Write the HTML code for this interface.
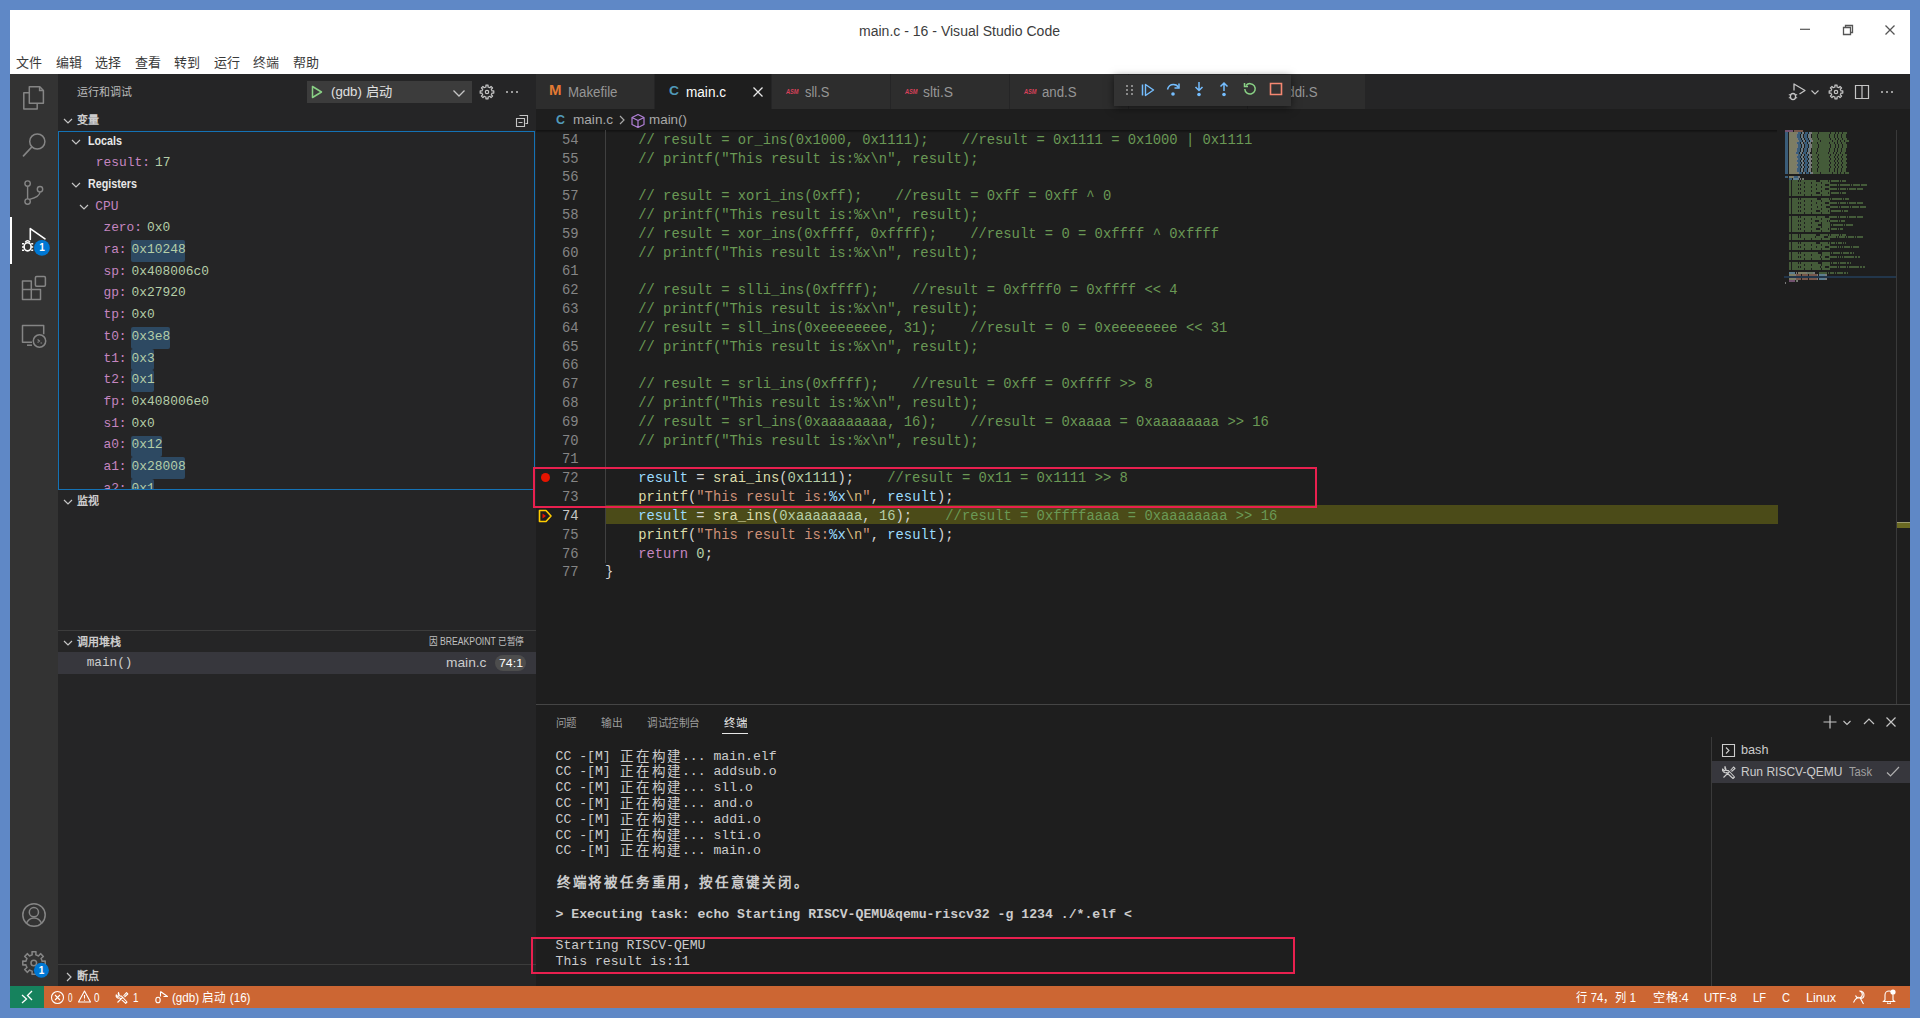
<!DOCTYPE html>
<html lang="zh-CN"><head><meta charset="utf-8"><title>main.c - 16 - Visual Studio Code</title>
<style>
html,body{margin:0;padding:0;width:1920px;height:1018px;overflow:hidden;background:#5f88c6;}
body>div,body>svg{position:absolute;}
body{font-family:"Liberation Sans",sans-serif;}
</style></head><body>
<div style="left:0px;top:0px;width:1920px;height:1018px;background:#5f88c6;"></div>
<div style="left:10px;top:10px;width:1900px;height:64px;background:#ffffff;"></div>
<div style="left:859px;top:21.00px;line-height:20px;font-size:14px;color:#3c3c3c;font-family:'Liberation Sans',sans-serif;white-space:pre;transform:scaleX(1.0024);transform-origin:0 50%;">main.c - 16 - Visual Studio Code</div>
<svg style="left:1799px;top:22px;" width="14" height="14" viewBox="0 0 14 14" fill="none"><path d="M1 7.3h10" stroke="#555" stroke-width="1.2"/></svg>
<svg style="left:1841px;top:23px;" width="14" height="14" viewBox="0 0 14 14" fill="none"><path d="M2.5 4.5h7v7h-7z M4.5 4.5v-2h7v7h-2" stroke="#555" stroke-width="1.3"/></svg>
<svg style="left:1883px;top:23px;" width="14" height="14" viewBox="0 0 14 14" fill="none"><path d="M2.5 2.5l9 9M11.5 2.5l-9 9" stroke="#555" stroke-width="1.3"/></svg>
<div style="left:16.0px;top:53.50px;line-height:18px;font-size:13px;color:#3a3a3a;font-family:'Liberation Sans',sans-serif;white-space:pre;">文件</div>
<div style="left:55.5px;top:53.50px;line-height:18px;font-size:13px;color:#3a3a3a;font-family:'Liberation Sans',sans-serif;white-space:pre;">编辑</div>
<div style="left:95.0px;top:53.50px;line-height:18px;font-size:13px;color:#3a3a3a;font-family:'Liberation Sans',sans-serif;white-space:pre;">选择</div>
<div style="left:134.5px;top:53.50px;line-height:18px;font-size:13px;color:#3a3a3a;font-family:'Liberation Sans',sans-serif;white-space:pre;">查看</div>
<div style="left:174.0px;top:53.50px;line-height:18px;font-size:13px;color:#3a3a3a;font-family:'Liberation Sans',sans-serif;white-space:pre;">转到</div>
<div style="left:213.5px;top:53.50px;line-height:18px;font-size:13px;color:#3a3a3a;font-family:'Liberation Sans',sans-serif;white-space:pre;">运行</div>
<div style="left:253.0px;top:53.50px;line-height:18px;font-size:13px;color:#3a3a3a;font-family:'Liberation Sans',sans-serif;white-space:pre;">终端</div>
<div style="left:292.5px;top:53.50px;line-height:18px;font-size:13px;color:#3a3a3a;font-family:'Liberation Sans',sans-serif;white-space:pre;">帮助</div>
<div style="left:10px;top:74px;width:48px;height:912px;background:#333333;"></div>
<div style="left:10px;top:217px;width:2px;height:47px;background:#ffffff;"></div>
<svg style="left:0;top:0" width="60" height="1000" viewBox="0 0 60 1000" fill="none"><path d="M29.3 86.7H39.8L43.4 90.4V103.3H29.3Z" stroke="#858585" stroke-width="1.5" stroke-linejoin="round"/><path d="M39.6 87v3.6h3.6" stroke="#858585" stroke-width="1.5"/><path d="M29.3 92.7H23.8V108.9H37.2V103.5" stroke="#858585" stroke-width="1.5" stroke-linejoin="round"/><circle cx="37.3" cy="141.5" r="7.6" stroke="#858585" stroke-width="1.5"/><path d="M31.8 147L23.5 155.8" stroke="#858585" stroke-width="1.7" stroke-linecap="round"/><circle cx="27.6" cy="183.6" r="2.7" stroke="#858585" stroke-width="1.4"/><circle cx="27.6" cy="201.6" r="2.7" stroke="#858585" stroke-width="1.4"/><circle cx="40" cy="189.2" r="2.7" stroke="#858585" stroke-width="1.4"/><path d="M27.6 186.3v12.6M40 191.9c0 3.5-3.5 5.5-10.4 7.4" stroke="#858585" stroke-width="1.4"/><path d="M30.3 239.5V228.6L45 238.9" stroke="#fff" stroke-width="1.6" stroke-linejoin="round" stroke-linecap="round"/><ellipse cx="27.6" cy="246.8" rx="3.5" ry="4.1" stroke="#fff" stroke-width="1.6"/><path d="M22 243.8h2M22 247h2M22 250.2h2M31.2 243.8h2M31.2 247h2M31.2 250.2h2M25.3 242.4c.6-1.2 1.3-1.7 2.3-1.7s1.7.5 2.3 1.7" stroke="#fff" stroke-width="1.4"/><circle cx="41.9" cy="247.9" r="7.9" fill="#0078d4"/><path d="M22.5 281h8.8v8.6H22.5z M22.5 289.6h8.8v9.9H22.5z M31.3 289.6h9.2v9.9h-9.2z" stroke="#858585" stroke-width="1.5" stroke-linejoin="round"/><rect x="35.4" y="276.6" width="10" height="9.7" rx="1.2" stroke="#858585" stroke-width="1.5"/><path d="M32 342.3H22.5V325.6h21.2v8.7" stroke="#858585" stroke-width="1.5" stroke-linejoin="round"/><path d="M27 345.2h5" stroke="#858585" stroke-width="1.5"/><circle cx="39.5" cy="341" r="6.2" stroke="#858585" stroke-width="1.5"/><path d="M37.6 339.5l1.9 1.5-1.9 1.5M40.5 343h1.6" stroke="#858585" stroke-width="1.1"/><circle cx="34" cy="915" r="11.2" stroke="#858585" stroke-width="1.5"/><circle cx="33.9" cy="912.2" r="4.6" stroke="#858585" stroke-width="1.5"/><path d="M26.2 923.6c1.6-3.5 4.4-5.6 7.8-5.6s6.2 2.1 7.8 5.6" stroke="#858585" stroke-width="1.5"/><path d="M41.84 960.29 L42.10 961.19 L45.22 961.00 L45.22 965.00 L42.10 964.81 L41.46 966.63 L41.01 967.45 L43.35 969.53 L40.53 972.35 L38.45 970.01 L36.71 970.84 L35.81 971.10 L36.00 974.22 L32.00 974.22 L32.19 971.10 L30.37 970.46 L29.55 970.01 L27.47 972.35 L24.65 969.53 L26.99 967.45 L26.16 965.71 L25.90 964.81 L22.78 965.00 L22.78 961.00 L25.90 961.19 L26.54 959.37 L26.99 958.55 L24.65 956.47 L27.47 953.65 L29.55 955.99 L31.29 955.16 L32.19 954.90 L32.00 951.78 L36.00 951.78 L35.81 954.90 L37.63 955.54 L38.45 955.99 L40.53 953.65 L43.35 956.47 L41.01 958.55Z" stroke="#858585" stroke-width="1.5" stroke-linejoin="round"/><circle cx="33.8" cy="963" r="2.8" stroke="#858585" stroke-width="1.5"/><circle cx="41.4" cy="970.2" r="7.5" fill="#0078d4"/></svg>
<div style="left:34px;top:240px;width:16px;height:16px;color:#fff;font:bold 10px/16px 'Liberation Sans',sans-serif;text-align:center">1</div>
<div style="left:33.5px;top:962.5px;width:16px;height:16px;color:#fff;font:bold 10px/16px 'Liberation Sans',sans-serif;text-align:center">1</div>
<div style="left:58px;top:74px;width:478px;height:912px;background:#252526;"></div>
<div style="left:77.4px;top:85.10px;line-height:15px;font-size:11px;color:#bbbbbb;font-family:'Liberation Sans',sans-serif;white-space:pre;">运行和调试</div>
<div style="left:307px;top:81px;width:165px;height:22px;background:#3c3c3c;"></div>
<svg style="left:309px;top:84px;" width="16" height="16" viewBox="0 0 16 16" fill="none"><path d="M3.5 2.5v11l9-5.5z" stroke="#89d185" stroke-width="1.5" stroke-linejoin="round"/></svg>
<div style="left:331px;top:83.30px;line-height:18px;font-size:13px;color:#e0e0e0;font-family:'Liberation Sans',sans-serif;white-space:pre;transform:scaleX(1.0172);transform-origin:0 50%;">(gdb) 启动</div>
<svg style="left:451px;top:85px;" width="16" height="16" viewBox="0 0 16 16" fill="none"><path d="M2.5 5.5l5.5 5.5 5.5-5.5" stroke="#c5c5c5" stroke-width="1.3"/></svg>
<svg style="left:479px;top:84px;" width="16" height="16" viewBox="0 0 16 16" fill="none"><path d="M12.82 6.33 L13.00 6.99 L14.81 6.90 L14.81 9.10 L13.00 9.01 L12.59 10.23 L12.25 10.82 L13.59 12.04 L12.04 13.59 L10.82 12.25 L9.67 12.82 L9.01 13.00 L9.10 14.81 L6.90 14.81 L6.99 13.00 L5.77 12.59 L5.18 12.25 L3.96 13.59 L2.41 12.04 L3.75 10.82 L3.18 9.67 L3.00 9.01 L1.19 9.10 L1.19 6.90 L3.00 6.99 L3.41 5.77 L3.75 5.18 L2.41 3.96 L3.96 2.41 L5.18 3.75 L6.33 3.18 L6.99 3.00 L6.90 1.19 L9.10 1.19 L9.01 3.00 L10.23 3.41 L10.82 3.75 L12.04 2.41 L13.59 3.96 L12.25 5.18Z" stroke="#c5c5c5" stroke-width="1.2" stroke-linejoin="round"/><circle cx="8" cy="8" r="1.7" stroke="#c5c5c5" stroke-width="1.2"/></svg>
<div style="left:506px;top:91px;width:2.2px;height:2.2px;border-radius:1.1px;background:#c5c5c5"></div>
<div style="left:511px;top:91px;width:2.2px;height:2.2px;border-radius:1.1px;background:#c5c5c5"></div>
<div style="left:516px;top:91px;width:2.2px;height:2.2px;border-radius:1.1px;background:#c5c5c5"></div>
<svg style="left:62.5px;top:115.5px;" width="10" height="10" viewBox="0 0 10 10" fill="none"><path d="M1 3l4 4 4-4" stroke="#c5c5c5" stroke-width="1.2"/></svg>
<div style="left:77.4px;top:112.50px;line-height:15px;font-size:11px;color:#cccccc;font-family:'Liberation Sans',sans-serif;white-space:pre;font-weight:bold;">变量</div>
<svg style="left:514px;top:113px;" width="16" height="16" viewBox="0 0 16 16" fill="none"><path d="M5.5 2.5h8v8h-2M2.5 5.5h8v8h-8z M4.5 9.5h4" stroke="#c5c5c5" stroke-width="1.1"/></svg>
<div style="left:58px;top:131px;width:477px;height:359px;background:transparent;border:1px solid #1472b5;box-sizing:border-box;"></div>
<svg style="left:71px;top:137.0px;" width="10" height="10" viewBox="0 0 10 10" fill="none"><path d="M1 3l4 4 4-4" stroke="#c5c5c5" stroke-width="1.2"/></svg>
<div style="left:87.5px;top:133.00px;line-height:17px;font-size:12px;color:#e8e8e8;font-family:'Liberation Sans',sans-serif;white-space:pre;font-weight:bold;transform:scaleX(0.8944);transform-origin:0 50%;">Locals</div>
<div style="left:95.8px;top:154.20px;line-height:18px;font-size:12.9px;color:#c586c0;font-family:'Liberation Mono',monospace;white-space:pre;">result:</div>
<div style="left:155.0px;top:154.20px;line-height:18px;font-size:12.9px;color:#b5cea8;font-family:'Liberation Mono',monospace;white-space:pre;">17</div>
<svg style="left:71px;top:180.4px;" width="10" height="10" viewBox="0 0 10 10" fill="none"><path d="M1 3l4 4 4-4" stroke="#c5c5c5" stroke-width="1.2"/></svg>
<div style="left:87.5px;top:176.40px;line-height:17px;font-size:12px;color:#e8e8e8;font-family:'Liberation Sans',sans-serif;white-space:pre;font-weight:bold;transform:scaleX(0.8957);transform-origin:0 50%;">Registers</div>
<svg style="left:79px;top:202.1px;" width="10" height="10" viewBox="0 0 10 10" fill="none"><path d="M1 3l4 4 4-4" stroke="#c5c5c5" stroke-width="1.2"/></svg>
<div style="left:95.3px;top:197.60px;line-height:18px;font-size:12.9px;color:#c586c0;font-family:'Liberation Mono',monospace;white-space:pre;">CPU</div>
<div style="left:59px;top:132px;width:475px;height:357px;overflow:hidden">
<div style="position:absolute;left:44.400000000000006px;top:87.3px;line-height:18px;font-size:12.9px;font-family:'Liberation Mono',monospace;white-space:pre;color:#c586c0">zero:</div>
<div style="position:absolute;left:88.10px;top:87.3px;line-height:18px;font-size:12.9px;font-family:'Liberation Mono',monospace;white-space:pre;color:#b5cea8">0x0</div>
<div style="position:absolute;left:71.7px;top:108.2px;width:54.5px;height:21.8px;background:#2d4962;border-radius:2px"></div>
<div style="position:absolute;left:44.400000000000006px;top:109.0px;line-height:18px;font-size:12.9px;font-family:'Liberation Mono',monospace;white-space:pre;color:#c586c0">ra:</div>
<div style="position:absolute;left:72.60px;top:109.0px;line-height:18px;font-size:12.9px;font-family:'Liberation Mono',monospace;white-space:pre;color:#b5cea8">0x10248</div>
<div style="position:absolute;left:44.400000000000006px;top:130.7px;line-height:18px;font-size:12.9px;font-family:'Liberation Mono',monospace;white-space:pre;color:#c586c0">sp:</div>
<div style="position:absolute;left:72.60px;top:130.7px;line-height:18px;font-size:12.9px;font-family:'Liberation Mono',monospace;white-space:pre;color:#b5cea8">0x408006c0</div>
<div style="position:absolute;left:44.400000000000006px;top:152.4px;line-height:18px;font-size:12.9px;font-family:'Liberation Mono',monospace;white-space:pre;color:#c586c0">gp:</div>
<div style="position:absolute;left:72.60px;top:152.4px;line-height:18px;font-size:12.9px;font-family:'Liberation Mono',monospace;white-space:pre;color:#b5cea8">0x27920</div>
<div style="position:absolute;left:44.400000000000006px;top:174.1px;line-height:18px;font-size:12.9px;font-family:'Liberation Mono',monospace;white-space:pre;color:#c586c0">tp:</div>
<div style="position:absolute;left:72.60px;top:174.1px;line-height:18px;font-size:12.9px;font-family:'Liberation Mono',monospace;white-space:pre;color:#b5cea8">0x0</div>
<div style="position:absolute;left:71.7px;top:195.0px;width:39.0px;height:21.8px;background:#2d4962;border-radius:2px"></div>
<div style="position:absolute;left:44.400000000000006px;top:195.8px;line-height:18px;font-size:12.9px;font-family:'Liberation Mono',monospace;white-space:pre;color:#c586c0">t0:</div>
<div style="position:absolute;left:72.60px;top:195.8px;line-height:18px;font-size:12.9px;font-family:'Liberation Mono',monospace;white-space:pre;color:#b5cea8">0x3e8</div>
<div style="position:absolute;left:71.7px;top:216.7px;width:23.4px;height:21.8px;background:#2d4962;border-radius:2px"></div>
<div style="position:absolute;left:44.400000000000006px;top:217.5px;line-height:18px;font-size:12.9px;font-family:'Liberation Mono',monospace;white-space:pre;color:#c586c0">t1:</div>
<div style="position:absolute;left:72.60px;top:217.5px;line-height:18px;font-size:12.9px;font-family:'Liberation Mono',monospace;white-space:pre;color:#b5cea8">0x3</div>
<div style="position:absolute;left:71.7px;top:238.4px;width:23.4px;height:21.8px;background:#2d4962;border-radius:2px"></div>
<div style="position:absolute;left:44.400000000000006px;top:239.2px;line-height:18px;font-size:12.9px;font-family:'Liberation Mono',monospace;white-space:pre;color:#c586c0">t2:</div>
<div style="position:absolute;left:72.60px;top:239.2px;line-height:18px;font-size:12.9px;font-family:'Liberation Mono',monospace;white-space:pre;color:#b5cea8">0x1</div>
<div style="position:absolute;left:44.400000000000006px;top:260.9px;line-height:18px;font-size:12.9px;font-family:'Liberation Mono',monospace;white-space:pre;color:#c586c0">fp:</div>
<div style="position:absolute;left:72.60px;top:260.9px;line-height:18px;font-size:12.9px;font-family:'Liberation Mono',monospace;white-space:pre;color:#b5cea8">0x408006e0</div>
<div style="position:absolute;left:44.400000000000006px;top:282.6px;line-height:18px;font-size:12.9px;font-family:'Liberation Mono',monospace;white-space:pre;color:#c586c0">s1:</div>
<div style="position:absolute;left:72.60px;top:282.6px;line-height:18px;font-size:12.9px;font-family:'Liberation Mono',monospace;white-space:pre;color:#b5cea8">0x0</div>
<div style="position:absolute;left:71.7px;top:303.5px;width:31.2px;height:21.8px;background:#2d4962;border-radius:2px"></div>
<div style="position:absolute;left:44.400000000000006px;top:304.3px;line-height:18px;font-size:12.9px;font-family:'Liberation Mono',monospace;white-space:pre;color:#c586c0">a0:</div>
<div style="position:absolute;left:72.60px;top:304.3px;line-height:18px;font-size:12.9px;font-family:'Liberation Mono',monospace;white-space:pre;color:#b5cea8">0x12</div>
<div style="position:absolute;left:71.7px;top:325.2px;width:54.5px;height:21.8px;background:#2d4962;border-radius:2px"></div>
<div style="position:absolute;left:44.400000000000006px;top:326.0px;line-height:18px;font-size:12.9px;font-family:'Liberation Mono',monospace;white-space:pre;color:#c586c0">a1:</div>
<div style="position:absolute;left:72.60px;top:326.0px;line-height:18px;font-size:12.9px;font-family:'Liberation Mono',monospace;white-space:pre;color:#b5cea8">0x28008</div>
<div style="position:absolute;left:71.7px;top:346.9px;width:23.4px;height:21.8px;background:#2d4962;border-radius:2px"></div>
<div style="position:absolute;left:44.400000000000006px;top:347.7px;line-height:18px;font-size:12.9px;font-family:'Liberation Mono',monospace;white-space:pre;color:#c586c0">a2:</div>
<div style="position:absolute;left:72.60px;top:347.7px;line-height:18px;font-size:12.9px;font-family:'Liberation Mono',monospace;white-space:pre;color:#b5cea8">0x1</div>
</div>
<svg style="left:62.5px;top:496.8px;" width="10" height="10" viewBox="0 0 10 10" fill="none"><path d="M1 3l4 4 4-4" stroke="#c5c5c5" stroke-width="1.2"/></svg>
<div style="left:77.3px;top:493.80px;line-height:15px;font-size:11px;color:#cccccc;font-family:'Liberation Sans',sans-serif;white-space:pre;font-weight:bold;">监视</div>
<div style="left:58px;top:630px;width:478px;height:1px;background:#3c3c3c;"></div>
<svg style="left:62.5px;top:637.5px;" width="10" height="10" viewBox="0 0 10 10" fill="none"><path d="M1 3l4 4 4-4" stroke="#c5c5c5" stroke-width="1.2"/></svg>
<div style="left:77.4px;top:634.50px;line-height:15px;font-size:11px;color:#cccccc;font-family:'Liberation Sans',sans-serif;white-space:pre;font-weight:bold;">调用堆栈</div>
<div style="left:429px;top:634.50px;line-height:14px;font-size:10px;color:#c0c0c0;font-family:'Liberation Sans',sans-serif;white-space:pre;transform:scaleX(0.8649);transform-origin:0 50%;">因 BREAKPOINT 已暂停</div>
<div style="left:58px;top:652px;width:478px;height:21.5px;background:#37373d;"></div>
<div style="left:86.7px;top:653.50px;line-height:18px;font-size:12.7px;color:#cccccc;font-family:'Liberation Mono',monospace;white-space:pre;">main()</div>
<div style="left:445.5px;top:653.70px;line-height:18px;font-size:13px;color:#cccccc;font-family:'Liberation Sans',sans-serif;white-space:pre;transform:scaleX(1.0575);transform-origin:0 50%;">main.c</div>
<div style="left:495px;top:655px;width:31px;height:16px;border-radius:8px;background:#4d4d4d"></div>
<div style="left:498.5px;top:655.50px;line-height:15px;font-size:11px;color:#ffffff;font-family:'Liberation Sans',sans-serif;white-space:pre;transform:scaleX(1.1204);transform-origin:0 50%;">74:1</div>
<div style="left:58px;top:964px;width:478px;height:1px;background:#3c3c3c;"></div>
<svg style="left:63.5px;top:971.5px;" width="10" height="10" viewBox="0 0 10 10" fill="none"><path d="M3 1l4 4-4 4" stroke="#c5c5c5" stroke-width="1.2"/></svg>
<div style="left:77.3px;top:968.80px;line-height:15px;font-size:11px;color:#cccccc;font-family:'Liberation Sans',sans-serif;white-space:pre;font-weight:bold;">断点</div>
<div style="left:536px;top:74px;width:1374px;height:630px;background:#1e1e1e;"></div>
<div style="left:536px;top:74px;width:1374px;height:35px;background:#252526;"></div>
<div style="left:536px;top:74px;width:118px;height:35px;background:#2d2d2d;"></div>
<div style="left:548.5px;top:80.30px;line-height:20px;font-size:14px;color:#e37933;font-family:'Liberation Sans',sans-serif;white-space:pre;font-weight:bold;transform:scaleX(1.0710);transform-origin:0 50%;">M</div>
<div style="left:567.5px;top:81.70px;line-height:20px;font-size:14px;color:#969696;font-family:'Liberation Sans',sans-serif;white-space:pre;transform:scaleX(0.9494);transform-origin:0 50%;">Makefile</div>
<div style="left:655px;top:74px;width:116px;height:35px;background:#1e1e1e;"></div>
<div style="left:668.5px;top:82.40px;line-height:18px;font-size:13px;color:#519aba;font-family:'Liberation Sans',sans-serif;white-space:pre;font-weight:bold;transform:scaleX(1.0649);transform-origin:0 50%;">C</div>
<div style="left:686px;top:81.70px;line-height:20px;font-size:14px;color:#ffffff;font-family:'Liberation Sans',sans-serif;white-space:pre;transform:scaleX(0.9701);transform-origin:0 50%;">main.c</div>
<div style="left:772px;top:74px;width:118px;height:35px;background:#2d2d2d;"></div>
<div style="left:786.1px;top:86.50px;line-height:10px;font-size:7px;color:#d9415a;font-family:'Liberation Sans',sans-serif;white-space:pre;font-weight:bold;transform:scaleX(0.8032);transform-origin:0 50%;font-style:italic;">ASM</div>
<div style="left:804.6px;top:81.70px;line-height:20px;font-size:14px;color:#969696;font-family:'Liberation Sans',sans-serif;white-space:pre;transform:scaleX(0.9224);transform-origin:0 50%;">sll.S</div>
<div style="left:891px;top:74px;width:118px;height:35px;background:#2d2d2d;"></div>
<div style="left:904.5px;top:86.50px;line-height:10px;font-size:7px;color:#d9415a;font-family:'Liberation Sans',sans-serif;white-space:pre;font-weight:bold;transform:scaleX(0.8032);transform-origin:0 50%;font-style:italic;">ASM</div>
<div style="left:923px;top:81.70px;line-height:20px;font-size:14px;color:#969696;font-family:'Liberation Sans',sans-serif;white-space:pre;transform:scaleX(0.9887);transform-origin:0 50%;">slti.S</div>
<div style="left:1010px;top:74px;width:118px;height:35px;background:#2d2d2d;"></div>
<div style="left:1023.5px;top:86.50px;line-height:10px;font-size:7px;color:#d9415a;font-family:'Liberation Sans',sans-serif;white-space:pre;font-weight:bold;transform:scaleX(0.8032);transform-origin:0 50%;font-style:italic;">ASM</div>
<div style="left:1042px;top:81.70px;line-height:20px;font-size:14px;color:#969696;font-family:'Liberation Sans',sans-serif;white-space:pre;transform:scaleX(0.9455);transform-origin:0 50%;">and.S</div>
<div style="left:1129px;top:74px;width:118px;height:35px;background:#2d2d2d;"></div>
<div style="left:1142.5px;top:86.50px;line-height:10px;font-size:7px;color:#d9415a;font-family:'Liberation Sans',sans-serif;white-space:pre;font-weight:bold;transform:scaleX(0.8032);transform-origin:0 50%;font-style:italic;">ASM</div>
<div style="left:1161px;top:81.70px;line-height:20px;font-size:14px;color:#969696;font-family:'Liberation Sans',sans-serif;white-space:pre;transform:scaleX(0.8788);transform-origin:0 50%;">addsub.S</div>
<div style="left:1248px;top:74px;width:117px;height:35px;background:#2d2d2d;"></div>
<div style="left:1261.5px;top:86.50px;line-height:10px;font-size:7px;color:#d9415a;font-family:'Liberation Sans',sans-serif;white-space:pre;font-weight:bold;transform:scaleX(0.8032);transform-origin:0 50%;font-style:italic;">ASM</div>
<div style="left:1280px;top:81.70px;line-height:20px;font-size:14px;color:#969696;font-family:'Liberation Sans',sans-serif;white-space:pre;transform:scaleX(0.9445);transform-origin:0 50%;">addi.S</div>
<svg style="left:750px;top:84px;" width="16" height="16" viewBox="0 0 16 16" fill="none"><path d="M3.5 3.5l9 9M12.5 3.5l-9 9" stroke="#e8e8e8" stroke-width="1.3"/></svg>
<div style="left:1114px;top:75px;width:177px;height:31px;background:#333333;box-shadow:0 2px 8px rgba(0,0,0,0.55)"></div>
<div style="left:1126.3px;top:85.2px;width:2px;height:2px;background:#8a8a8a"></div>
<div style="left:1126.3px;top:89.2px;width:2px;height:2px;background:#8a8a8a"></div>
<div style="left:1126.3px;top:93.4px;width:2px;height:2px;background:#8a8a8a"></div>
<div style="left:1130.5px;top:85.2px;width:2px;height:2px;background:#8a8a8a"></div>
<div style="left:1130.5px;top:89.2px;width:2px;height:2px;background:#8a8a8a"></div>
<div style="left:1130.5px;top:93.4px;width:2px;height:2px;background:#8a8a8a"></div>
<svg style="left:1140px;top:82px;" width="16" height="16" viewBox="0 0 16 16" fill="none"><path d="M2.5 2.5v11" stroke="#75beff" stroke-width="1.5"/><path d="M5.5 2.5v11l8-5.5z" stroke="#75beff" stroke-width="1.4" stroke-linejoin="round"/></svg>
<svg style="left:1165px;top:81px;" width="16" height="16" viewBox="0 0 16 16" fill="none"><path d="M2.5 8.5c.8-3.5 3.5-5 6-5 2.2 0 4 1 5 3" stroke="#75beff" stroke-width="1.5"/><path d="M14 2.5v4.5h-4.5" stroke="#75beff" stroke-width="1.5"/><circle cx="8" cy="13" r="1.8" fill="#75beff"/></svg>
<svg style="left:1191px;top:81px;" width="16" height="16" viewBox="0 0 16 16" fill="none"><path d="M8 1v8M4.5 6l3.5 3.5L11.5 6" stroke="#75beff" stroke-width="1.5"/><circle cx="8" cy="13.5" r="1.8" fill="#75beff"/></svg>
<svg style="left:1216px;top:81px;" width="16" height="16" viewBox="0 0 16 16" fill="none"><path d="M8 10V2M4.5 5.5L8 2l3.5 3.5" stroke="#75beff" stroke-width="1.5"/><circle cx="8" cy="13.5" r="1.8" fill="#75beff"/></svg>
<svg style="left:1242px;top:81px;" width="16" height="16" viewBox="0 0 16 16" fill="none"><path d="M4 4.5A5.2 5.2 0 1 1 2.8 8" stroke="#89d185" stroke-width="1.5"/><path d="M2.5 2v3.5H6" stroke="#89d185" stroke-width="1.5"/></svg>
<svg style="left:1268px;top:81px;" width="16" height="16" viewBox="0 0 16 16" fill="none"><path d="M2.5 2.5h11v11h-11z" stroke="#f48771" stroke-width="1.6"/></svg>
<svg style="left:1780px;top:78px;" width="30" height="28" viewBox="0 0 30 28" fill="none"><path d="M14 12.5V6L25 12.5 19.5 16" stroke="#c5c5c5" stroke-width="1.3" stroke-linejoin="round"/><ellipse cx="13" cy="18.6" rx="2.6" ry="3.1" stroke="#c5c5c5" stroke-width="1.3"/><path d="M8.8 16.8h1.6M8.8 19.8h1.6M15.6 16.8h1.6M15.6 19.8h1.6" stroke="#c5c5c5" stroke-width="1.1"/></svg>
<svg style="left:1810px;top:87px;" width="10" height="10" viewBox="0 0 10 10" fill="none"><path d="M1.5 3.5l3.5 3.5 3.5-3.5" stroke="#c5c5c5" stroke-width="1.1"/></svg>
<svg style="left:1828px;top:84px;" width="16" height="16" viewBox="0 0 16 16" fill="none"><path d="M12.82 6.33 L13.00 6.99 L14.81 6.90 L14.81 9.10 L13.00 9.01 L12.59 10.23 L12.25 10.82 L13.59 12.04 L12.04 13.59 L10.82 12.25 L9.67 12.82 L9.01 13.00 L9.10 14.81 L6.90 14.81 L6.99 13.00 L5.77 12.59 L5.18 12.25 L3.96 13.59 L2.41 12.04 L3.75 10.82 L3.18 9.67 L3.00 9.01 L1.19 9.10 L1.19 6.90 L3.00 6.99 L3.41 5.77 L3.75 5.18 L2.41 3.96 L3.96 2.41 L5.18 3.75 L6.33 3.18 L6.99 3.00 L6.90 1.19 L9.10 1.19 L9.01 3.00 L10.23 3.41 L10.82 3.75 L12.04 2.41 L13.59 3.96 L12.25 5.18Z" stroke="#c5c5c5" stroke-width="1.2" stroke-linejoin="round"/><circle cx="8" cy="8" r="1.7" stroke="#c5c5c5" stroke-width="1.2"/></svg>
<svg style="left:1854px;top:84px;" width="16" height="16" viewBox="0 0 16 16" fill="none"><path d="M1.5 1.5h13v13h-13zM8 1.5v13" stroke="#c5c5c5" stroke-width="1.2"/></svg>
<div style="left:1881px;top:91px;width:2.2px;height:2.2px;border-radius:1.1px;background:#c5c5c5"></div>
<div style="left:1886px;top:91px;width:2.2px;height:2.2px;border-radius:1.1px;background:#c5c5c5"></div>
<div style="left:1891px;top:91px;width:2.2px;height:2.2px;border-radius:1.1px;background:#c5c5c5"></div>
<div style="left:556px;top:112.00px;line-height:17px;font-size:12px;color:#519aba;font-family:'Liberation Sans',sans-serif;white-space:pre;font-weight:bold;transform:scaleX(1.0378);transform-origin:0 50%;">C</div>
<div style="left:573px;top:111.30px;line-height:18px;font-size:13px;color:#a9a9a9;font-family:'Liberation Sans',sans-serif;white-space:pre;transform:scaleX(1.0445);transform-origin:0 50%;">main.c</div>
<svg style="left:617px;top:114px;" width="10" height="12" viewBox="0 0 10 12" fill="none"><path d="M3 2l4 4-4 4" stroke="#a9a9a9" stroke-width="1.2"/></svg>
<svg style="left:630px;top:113px;" width="16" height="16" viewBox="0 0 16 16" fill="none"><path d="M8 1.5l6 3v7l-6 3-6-3v-7z M2 4.5l6 3 6-3 M8 7.5v7" stroke="#b180d7" stroke-width="1.2" stroke-linejoin="round"/></svg>
<div style="left:648.7px;top:111.30px;line-height:18px;font-size:13px;color:#a9a9a9;font-family:'Liberation Sans',sans-serif;white-space:pre;transform:scaleX(1.0314);transform-origin:0 50%;">main()</div>
<div style="left:536px;top:130px;width:1241px;height:3px;background:linear-gradient(rgba(0,0,0,0.45),rgba(0,0,0,0))"></div>
<div style="left:605px;top:505px;width:1173px;height:19px;background:#4b4b18;"></div>
<div style="left:605px;top:130px;width:1px;height:433px;background:#404040;"></div>
<div style="left:561.89px;top:130.70px;line-height:19px;font-size:13.84px;color:#858585;font-family:'Liberation Mono',monospace;white-space:pre;">54</div>
<div style="left:605px;top:130.70px;line-height:19px;font-size:13.84px;color:#d4d4d4;font-family:'Liberation Mono',monospace;white-space:pre;"><span style="color:#d4d4d4">    </span><span style="color:#6a9955">// result = or_ins(0x1000, 0x1111);    //result = 0x1111 = 0x1000 | 0x1111</span></div>
<div style="left:561.89px;top:149.51px;line-height:19px;font-size:13.84px;color:#858585;font-family:'Liberation Mono',monospace;white-space:pre;">55</div>
<div style="left:605px;top:149.51px;line-height:19px;font-size:13.84px;color:#d4d4d4;font-family:'Liberation Mono',monospace;white-space:pre;"><span style="color:#d4d4d4">    </span><span style="color:#6a9955">// printf(&quot;This result is:%x\n&quot;, result);</span></div>
<div style="left:561.89px;top:168.32px;line-height:19px;font-size:13.84px;color:#858585;font-family:'Liberation Mono',monospace;white-space:pre;">56</div>
<div style="left:561.89px;top:187.13px;line-height:19px;font-size:13.84px;color:#858585;font-family:'Liberation Mono',monospace;white-space:pre;">57</div>
<div style="left:605px;top:187.13px;line-height:19px;font-size:13.84px;color:#d4d4d4;font-family:'Liberation Mono',monospace;white-space:pre;"><span style="color:#d4d4d4">    </span><span style="color:#6a9955">// result = xori_ins(0xff);    //result = 0xff = 0xff ^ 0</span></div>
<div style="left:561.89px;top:205.94px;line-height:19px;font-size:13.84px;color:#858585;font-family:'Liberation Mono',monospace;white-space:pre;">58</div>
<div style="left:605px;top:205.94px;line-height:19px;font-size:13.84px;color:#d4d4d4;font-family:'Liberation Mono',monospace;white-space:pre;"><span style="color:#d4d4d4">    </span><span style="color:#6a9955">// printf(&quot;This result is:%x\n&quot;, result);</span></div>
<div style="left:561.89px;top:224.75px;line-height:19px;font-size:13.84px;color:#858585;font-family:'Liberation Mono',monospace;white-space:pre;">59</div>
<div style="left:605px;top:224.75px;line-height:19px;font-size:13.84px;color:#d4d4d4;font-family:'Liberation Mono',monospace;white-space:pre;"><span style="color:#d4d4d4">    </span><span style="color:#6a9955">// result = xor_ins(0xffff, 0xffff);    //result = 0 = 0xffff ^ 0xffff</span></div>
<div style="left:561.89px;top:243.56px;line-height:19px;font-size:13.84px;color:#858585;font-family:'Liberation Mono',monospace;white-space:pre;">60</div>
<div style="left:605px;top:243.56px;line-height:19px;font-size:13.84px;color:#d4d4d4;font-family:'Liberation Mono',monospace;white-space:pre;"><span style="color:#d4d4d4">    </span><span style="color:#6a9955">// printf(&quot;This result is:%x\n&quot;, result);</span></div>
<div style="left:561.89px;top:262.37px;line-height:19px;font-size:13.84px;color:#858585;font-family:'Liberation Mono',monospace;white-space:pre;">61</div>
<div style="left:561.89px;top:281.18px;line-height:19px;font-size:13.84px;color:#858585;font-family:'Liberation Mono',monospace;white-space:pre;">62</div>
<div style="left:605px;top:281.18px;line-height:19px;font-size:13.84px;color:#d4d4d4;font-family:'Liberation Mono',monospace;white-space:pre;"><span style="color:#d4d4d4">    </span><span style="color:#6a9955">// result = slli_ins(0xffff);    //result = 0xffff0 = 0xffff &lt;&lt; 4</span></div>
<div style="left:561.89px;top:299.99px;line-height:19px;font-size:13.84px;color:#858585;font-family:'Liberation Mono',monospace;white-space:pre;">63</div>
<div style="left:605px;top:299.99px;line-height:19px;font-size:13.84px;color:#d4d4d4;font-family:'Liberation Mono',monospace;white-space:pre;"><span style="color:#d4d4d4">    </span><span style="color:#6a9955">// printf(&quot;This result is:%x\n&quot;, result);</span></div>
<div style="left:561.89px;top:318.80px;line-height:19px;font-size:13.84px;color:#858585;font-family:'Liberation Mono',monospace;white-space:pre;">64</div>
<div style="left:605px;top:318.80px;line-height:19px;font-size:13.84px;color:#d4d4d4;font-family:'Liberation Mono',monospace;white-space:pre;"><span style="color:#d4d4d4">    </span><span style="color:#6a9955">// result = sll_ins(0xeeeeeeee, 31);    //result = 0 = 0xeeeeeeee &lt;&lt; 31</span></div>
<div style="left:561.89px;top:337.61px;line-height:19px;font-size:13.84px;color:#858585;font-family:'Liberation Mono',monospace;white-space:pre;">65</div>
<div style="left:605px;top:337.61px;line-height:19px;font-size:13.84px;color:#d4d4d4;font-family:'Liberation Mono',monospace;white-space:pre;"><span style="color:#d4d4d4">    </span><span style="color:#6a9955">// printf(&quot;This result is:%x\n&quot;, result);</span></div>
<div style="left:561.89px;top:356.42px;line-height:19px;font-size:13.84px;color:#858585;font-family:'Liberation Mono',monospace;white-space:pre;">66</div>
<div style="left:561.89px;top:375.23px;line-height:19px;font-size:13.84px;color:#858585;font-family:'Liberation Mono',monospace;white-space:pre;">67</div>
<div style="left:605px;top:375.23px;line-height:19px;font-size:13.84px;color:#d4d4d4;font-family:'Liberation Mono',monospace;white-space:pre;"><span style="color:#d4d4d4">    </span><span style="color:#6a9955">// result = srli_ins(0xffff);    //result = 0xff = 0xffff &gt;&gt; 8</span></div>
<div style="left:561.89px;top:394.04px;line-height:19px;font-size:13.84px;color:#858585;font-family:'Liberation Mono',monospace;white-space:pre;">68</div>
<div style="left:605px;top:394.04px;line-height:19px;font-size:13.84px;color:#d4d4d4;font-family:'Liberation Mono',monospace;white-space:pre;"><span style="color:#d4d4d4">    </span><span style="color:#6a9955">// printf(&quot;This result is:%x\n&quot;, result);</span></div>
<div style="left:561.89px;top:412.85px;line-height:19px;font-size:13.84px;color:#858585;font-family:'Liberation Mono',monospace;white-space:pre;">69</div>
<div style="left:605px;top:412.85px;line-height:19px;font-size:13.84px;color:#d4d4d4;font-family:'Liberation Mono',monospace;white-space:pre;"><span style="color:#d4d4d4">    </span><span style="color:#6a9955">// result = srl_ins(0xaaaaaaaa, 16);    //result = 0xaaaa = 0xaaaaaaaa &gt;&gt; 16</span></div>
<div style="left:561.89px;top:431.66px;line-height:19px;font-size:13.84px;color:#858585;font-family:'Liberation Mono',monospace;white-space:pre;">70</div>
<div style="left:605px;top:431.66px;line-height:19px;font-size:13.84px;color:#d4d4d4;font-family:'Liberation Mono',monospace;white-space:pre;"><span style="color:#d4d4d4">    </span><span style="color:#6a9955">// printf(&quot;This result is:%x\n&quot;, result);</span></div>
<div style="left:561.89px;top:450.47px;line-height:19px;font-size:13.84px;color:#858585;font-family:'Liberation Mono',monospace;white-space:pre;">71</div>
<div style="left:561.89px;top:469.28px;line-height:19px;font-size:13.84px;color:#858585;font-family:'Liberation Mono',monospace;white-space:pre;">72</div>
<div style="left:605px;top:469.28px;line-height:19px;font-size:13.84px;color:#d4d4d4;font-family:'Liberation Mono',monospace;white-space:pre;"><span style="color:#d4d4d4">    </span><span style="color:#9cdcfe">result</span><span style="color:#d4d4d4"> = </span><span style="color:#dcdcaa">srai_ins</span><span style="color:#d4d4d4">(</span><span style="color:#b5cea8">0x1111</span><span style="color:#d4d4d4">);    </span><span style="color:#6a9955">//result = 0x11 = 0x1111 &gt;&gt; 8</span></div>
<div style="left:561.89px;top:488.09px;line-height:19px;font-size:13.84px;color:#858585;font-family:'Liberation Mono',monospace;white-space:pre;">73</div>
<div style="left:605px;top:488.09px;line-height:19px;font-size:13.84px;color:#d4d4d4;font-family:'Liberation Mono',monospace;white-space:pre;"><span style="color:#d4d4d4">    </span><span style="color:#dcdcaa">printf</span><span style="color:#d4d4d4">(</span><span style="color:#ce9178">&quot;This result is:</span><span style="color:#9cdcfe">%x</span><span style="color:#d7ba7d">\n</span><span style="color:#ce9178">&quot;</span><span style="color:#d4d4d4">, </span><span style="color:#9cdcfe">result</span><span style="color:#d4d4d4">);</span></div>
<div style="left:561.89px;top:506.90px;line-height:19px;font-size:13.84px;color:#c6c6c6;font-family:'Liberation Mono',monospace;white-space:pre;">74</div>
<div style="left:605px;top:506.90px;line-height:19px;font-size:13.84px;color:#d4d4d4;font-family:'Liberation Mono',monospace;white-space:pre;"><span style="color:#d4d4d4">    </span><span style="color:#9cdcfe">result</span><span style="color:#d4d4d4"> = </span><span style="color:#dcdcaa">sra_ins</span><span style="color:#d4d4d4">(</span><span style="color:#b5cea8">0xaaaaaaaa</span><span style="color:#d4d4d4">, </span><span style="color:#b5cea8">16</span><span style="color:#d4d4d4">);    </span><span style="color:#6a9955">//result = 0xffffaaaa = 0xaaaaaaaa &gt;&gt; 16</span></div>
<div style="left:561.89px;top:525.71px;line-height:19px;font-size:13.84px;color:#858585;font-family:'Liberation Mono',monospace;white-space:pre;">75</div>
<div style="left:605px;top:525.71px;line-height:19px;font-size:13.84px;color:#d4d4d4;font-family:'Liberation Mono',monospace;white-space:pre;"><span style="color:#d4d4d4">    </span><span style="color:#dcdcaa">printf</span><span style="color:#d4d4d4">(</span><span style="color:#ce9178">&quot;This result is:</span><span style="color:#9cdcfe">%x</span><span style="color:#d7ba7d">\n</span><span style="color:#ce9178">&quot;</span><span style="color:#d4d4d4">, </span><span style="color:#9cdcfe">result</span><span style="color:#d4d4d4">);</span></div>
<div style="left:561.89px;top:544.52px;line-height:19px;font-size:13.84px;color:#858585;font-family:'Liberation Mono',monospace;white-space:pre;">76</div>
<div style="left:605px;top:544.52px;line-height:19px;font-size:13.84px;color:#d4d4d4;font-family:'Liberation Mono',monospace;white-space:pre;"><span style="color:#d4d4d4">    </span><span style="color:#c586c0">return</span><span style="color:#d4d4d4"> </span><span style="color:#b5cea8">0</span><span style="color:#d4d4d4">;</span></div>
<div style="left:561.89px;top:563.33px;line-height:19px;font-size:13.84px;color:#858585;font-family:'Liberation Mono',monospace;white-space:pre;">77</div>
<div style="left:605px;top:563.33px;line-height:19px;font-size:13.84px;color:#d4d4d4;font-family:'Liberation Mono',monospace;white-space:pre;"><span style="color:#d4d4d4">}</span></div>
<div style="left:540.5px;top:473.3px;width:9px;height:9px;border-radius:5px;background:#e51400"></div>
<svg style="left:537px;top:508px;" width="16" height="16" viewBox="0 0 16 16" fill="none"><path d="M2.5 2.5h6.5l5 5.5-5 5.5H2.5z" stroke="#ffcc00" stroke-width="1.6" stroke-linejoin="round"/><path d="M5.5 5.5l3.5 2.5-3.5 2.5z" fill="#e51400"/></svg>
<div style="left:532.5px;top:467px;width:784px;height:40.6px;background:transparent;border:2px solid #e8204f;box-sizing:border-box;"></div>
<div style="left:1896px;top:130px;width:1px;height:574px;background:#3a3a3a;"></div>
<div style="left:1897px;top:521.5px;width:13px;height:1.5px;background:#9c9c70;"></div>
<div style="left:1897px;top:523px;width:13px;height:5px;background:#6b6a22;"></div>
<svg style="left:0;top:0;opacity:0.5" width="1920" height="300" viewBox="0 0 1920 300"><rect x="1785" y="130" width="8" height="2" fill="#c586c0"/><rect x="1794" y="130" width="9" height="2" fill="#ce9178"/><rect x="1785" y="132" width="3" height="2" fill="#569cd6"/><rect x="1789" y="132" width="8" height="2" fill="#dcdcaa"/><rect x="1797" y="132" width="1" height="2" fill="#d4d4d4"/><rect x="1798" y="132" width="3" height="2" fill="#569cd6"/><rect x="1802" y="132" width="1" height="2" fill="#9cdcfe"/><rect x="1803" y="132" width="1" height="2" fill="#d4d4d4"/><rect x="1805" y="132" width="3" height="2" fill="#569cd6"/><rect x="1809" y="132" width="1" height="2" fill="#9cdcfe"/><rect x="1810" y="132" width="1" height="2" fill="#d4d4d4"/><rect x="1811" y="132" width="1" height="2" fill="#d4d4d4"/><rect x="1812" y="132" width="6" height="2" fill="#6a9955"/><rect x="1819" y="132" width="11" height="2" fill="#6a9955"/><rect x="1831" y="132" width="4" height="2" fill="#6a9955"/><rect x="1836" y="132" width="2" height="2" fill="#6a9955"/><rect x="1839" y="132" width="3" height="2" fill="#6a9955"/><rect x="1843" y="132" width="4" height="2" fill="#6a9955"/><rect x="1785" y="134" width="3" height="2" fill="#569cd6"/><rect x="1789" y="134" width="7" height="2" fill="#dcdcaa"/><rect x="1796" y="134" width="1" height="2" fill="#d4d4d4"/><rect x="1797" y="134" width="3" height="2" fill="#569cd6"/><rect x="1801" y="134" width="1" height="2" fill="#9cdcfe"/><rect x="1802" y="134" width="1" height="2" fill="#d4d4d4"/><rect x="1804" y="134" width="3" height="2" fill="#569cd6"/><rect x="1808" y="134" width="1" height="2" fill="#9cdcfe"/><rect x="1809" y="134" width="1" height="2" fill="#d4d4d4"/><rect x="1810" y="134" width="1" height="2" fill="#d4d4d4"/><rect x="1812" y="134" width="5" height="2" fill="#6a9955"/><rect x="1818" y="134" width="11" height="2" fill="#6a9955"/><rect x="1830" y="134" width="4" height="2" fill="#6a9955"/><rect x="1835" y="134" width="2" height="2" fill="#6a9955"/><rect x="1838" y="134" width="3" height="2" fill="#6a9955"/><rect x="1842" y="134" width="4" height="2" fill="#6a9955"/><rect x="1785" y="136" width="3" height="2" fill="#569cd6"/><rect x="1789" y="136" width="7" height="2" fill="#dcdcaa"/><rect x="1796" y="136" width="1" height="2" fill="#d4d4d4"/><rect x="1797" y="136" width="3" height="2" fill="#569cd6"/><rect x="1801" y="136" width="1" height="2" fill="#9cdcfe"/><rect x="1802" y="136" width="1" height="2" fill="#d4d4d4"/><rect x="1804" y="136" width="3" height="2" fill="#569cd6"/><rect x="1808" y="136" width="1" height="2" fill="#9cdcfe"/><rect x="1809" y="136" width="1" height="2" fill="#d4d4d4"/><rect x="1810" y="136" width="1" height="2" fill="#d4d4d4"/><rect x="1812" y="136" width="5" height="2" fill="#6a9955"/><rect x="1818" y="136" width="11" height="2" fill="#6a9955"/><rect x="1830" y="136" width="4" height="2" fill="#6a9955"/><rect x="1835" y="136" width="2" height="2" fill="#6a9955"/><rect x="1838" y="136" width="3" height="2" fill="#6a9955"/><rect x="1842" y="136" width="4" height="2" fill="#6a9955"/><rect x="1785" y="138" width="3" height="2" fill="#569cd6"/><rect x="1789" y="138" width="8" height="2" fill="#dcdcaa"/><rect x="1797" y="138" width="1" height="2" fill="#d4d4d4"/><rect x="1798" y="138" width="3" height="2" fill="#569cd6"/><rect x="1802" y="138" width="1" height="2" fill="#9cdcfe"/><rect x="1803" y="138" width="1" height="2" fill="#d4d4d4"/><rect x="1805" y="138" width="3" height="2" fill="#569cd6"/><rect x="1809" y="138" width="1" height="2" fill="#9cdcfe"/><rect x="1810" y="138" width="1" height="2" fill="#d4d4d4"/><rect x="1811" y="138" width="1" height="2" fill="#d4d4d4"/><rect x="1812" y="138" width="6" height="2" fill="#6a9955"/><rect x="1819" y="138" width="11" height="2" fill="#6a9955"/><rect x="1831" y="138" width="4" height="2" fill="#6a9955"/><rect x="1836" y="138" width="2" height="2" fill="#6a9955"/><rect x="1839" y="138" width="3" height="2" fill="#6a9955"/><rect x="1843" y="138" width="4" height="2" fill="#6a9955"/><rect x="1785" y="140" width="3" height="2" fill="#569cd6"/><rect x="1789" y="140" width="9" height="2" fill="#dcdcaa"/><rect x="1798" y="140" width="1" height="2" fill="#d4d4d4"/><rect x="1799" y="140" width="3" height="2" fill="#569cd6"/><rect x="1803" y="140" width="1" height="2" fill="#9cdcfe"/><rect x="1804" y="140" width="1" height="2" fill="#d4d4d4"/><rect x="1806" y="140" width="3" height="2" fill="#569cd6"/><rect x="1810" y="140" width="1" height="2" fill="#9cdcfe"/><rect x="1811" y="140" width="1" height="2" fill="#d4d4d4"/><rect x="1812" y="140" width="1" height="2" fill="#d4d4d4"/><rect x="1813" y="140" width="7" height="2" fill="#6a9955"/><rect x="1821" y="140" width="11" height="2" fill="#6a9955"/><rect x="1833" y="140" width="4" height="2" fill="#6a9955"/><rect x="1838" y="140" width="2" height="2" fill="#6a9955"/><rect x="1841" y="140" width="3" height="2" fill="#6a9955"/><rect x="1845" y="140" width="4" height="2" fill="#6a9955"/><rect x="1785" y="142" width="3" height="2" fill="#569cd6"/><rect x="1789" y="142" width="7" height="2" fill="#dcdcaa"/><rect x="1796" y="142" width="1" height="2" fill="#d4d4d4"/><rect x="1797" y="142" width="3" height="2" fill="#569cd6"/><rect x="1801" y="142" width="1" height="2" fill="#9cdcfe"/><rect x="1802" y="142" width="1" height="2" fill="#d4d4d4"/><rect x="1804" y="142" width="3" height="2" fill="#569cd6"/><rect x="1808" y="142" width="1" height="2" fill="#9cdcfe"/><rect x="1809" y="142" width="1" height="2" fill="#d4d4d4"/><rect x="1810" y="142" width="1" height="2" fill="#d4d4d4"/><rect x="1812" y="142" width="5" height="2" fill="#6a9955"/><rect x="1818" y="142" width="11" height="2" fill="#6a9955"/><rect x="1830" y="142" width="4" height="2" fill="#6a9955"/><rect x="1835" y="142" width="2" height="2" fill="#6a9955"/><rect x="1838" y="142" width="3" height="2" fill="#6a9955"/><rect x="1842" y="142" width="4" height="2" fill="#6a9955"/><rect x="1785" y="144" width="3" height="2" fill="#569cd6"/><rect x="1789" y="144" width="8" height="2" fill="#dcdcaa"/><rect x="1797" y="144" width="1" height="2" fill="#d4d4d4"/><rect x="1798" y="144" width="3" height="2" fill="#569cd6"/><rect x="1802" y="144" width="1" height="2" fill="#9cdcfe"/><rect x="1803" y="144" width="1" height="2" fill="#d4d4d4"/><rect x="1805" y="144" width="3" height="2" fill="#569cd6"/><rect x="1809" y="144" width="1" height="2" fill="#9cdcfe"/><rect x="1810" y="144" width="1" height="2" fill="#d4d4d4"/><rect x="1811" y="144" width="1" height="2" fill="#d4d4d4"/><rect x="1812" y="144" width="6" height="2" fill="#6a9955"/><rect x="1819" y="144" width="11" height="2" fill="#6a9955"/><rect x="1831" y="144" width="4" height="2" fill="#6a9955"/><rect x="1836" y="144" width="2" height="2" fill="#6a9955"/><rect x="1839" y="144" width="3" height="2" fill="#6a9955"/><rect x="1843" y="144" width="4" height="2" fill="#6a9955"/><rect x="1785" y="146" width="3" height="2" fill="#569cd6"/><rect x="1789" y="146" width="8" height="2" fill="#dcdcaa"/><rect x="1797" y="146" width="1" height="2" fill="#d4d4d4"/><rect x="1798" y="146" width="3" height="2" fill="#569cd6"/><rect x="1802" y="146" width="1" height="2" fill="#9cdcfe"/><rect x="1803" y="146" width="1" height="2" fill="#d4d4d4"/><rect x="1805" y="146" width="3" height="2" fill="#569cd6"/><rect x="1809" y="146" width="1" height="2" fill="#9cdcfe"/><rect x="1810" y="146" width="1" height="2" fill="#d4d4d4"/><rect x="1811" y="146" width="1" height="2" fill="#d4d4d4"/><rect x="1812" y="146" width="6" height="2" fill="#6a9955"/><rect x="1819" y="146" width="11" height="2" fill="#6a9955"/><rect x="1831" y="146" width="4" height="2" fill="#6a9955"/><rect x="1836" y="146" width="2" height="2" fill="#6a9955"/><rect x="1839" y="146" width="3" height="2" fill="#6a9955"/><rect x="1843" y="146" width="4" height="2" fill="#6a9955"/><rect x="1785" y="148" width="3" height="2" fill="#569cd6"/><rect x="1789" y="148" width="7" height="2" fill="#dcdcaa"/><rect x="1796" y="148" width="1" height="2" fill="#d4d4d4"/><rect x="1797" y="148" width="3" height="2" fill="#569cd6"/><rect x="1801" y="148" width="1" height="2" fill="#9cdcfe"/><rect x="1802" y="148" width="1" height="2" fill="#d4d4d4"/><rect x="1804" y="148" width="3" height="2" fill="#569cd6"/><rect x="1808" y="148" width="1" height="2" fill="#9cdcfe"/><rect x="1809" y="148" width="1" height="2" fill="#d4d4d4"/><rect x="1810" y="148" width="1" height="2" fill="#d4d4d4"/><rect x="1812" y="148" width="5" height="2" fill="#6a9955"/><rect x="1818" y="148" width="11" height="2" fill="#6a9955"/><rect x="1830" y="148" width="4" height="2" fill="#6a9955"/><rect x="1835" y="148" width="2" height="2" fill="#6a9955"/><rect x="1838" y="148" width="3" height="2" fill="#6a9955"/><rect x="1842" y="148" width="4" height="2" fill="#6a9955"/><rect x="1785" y="150" width="3" height="2" fill="#569cd6"/><rect x="1789" y="150" width="7" height="2" fill="#dcdcaa"/><rect x="1796" y="150" width="1" height="2" fill="#d4d4d4"/><rect x="1797" y="150" width="3" height="2" fill="#569cd6"/><rect x="1801" y="150" width="1" height="2" fill="#9cdcfe"/><rect x="1802" y="150" width="1" height="2" fill="#d4d4d4"/><rect x="1804" y="150" width="3" height="2" fill="#569cd6"/><rect x="1808" y="150" width="1" height="2" fill="#9cdcfe"/><rect x="1809" y="150" width="1" height="2" fill="#d4d4d4"/><rect x="1810" y="150" width="1" height="2" fill="#d4d4d4"/><rect x="1812" y="150" width="5" height="2" fill="#6a9955"/><rect x="1818" y="150" width="11" height="2" fill="#6a9955"/><rect x="1830" y="150" width="4" height="2" fill="#6a9955"/><rect x="1835" y="150" width="2" height="2" fill="#6a9955"/><rect x="1838" y="150" width="3" height="2" fill="#6a9955"/><rect x="1842" y="150" width="4" height="2" fill="#6a9955"/><rect x="1785" y="152" width="3" height="2" fill="#569cd6"/><rect x="1789" y="152" width="6" height="2" fill="#dcdcaa"/><rect x="1795" y="152" width="1" height="2" fill="#d4d4d4"/><rect x="1796" y="152" width="3" height="2" fill="#569cd6"/><rect x="1800" y="152" width="1" height="2" fill="#9cdcfe"/><rect x="1801" y="152" width="1" height="2" fill="#d4d4d4"/><rect x="1803" y="152" width="3" height="2" fill="#569cd6"/><rect x="1807" y="152" width="1" height="2" fill="#9cdcfe"/><rect x="1808" y="152" width="1" height="2" fill="#d4d4d4"/><rect x="1809" y="152" width="1" height="2" fill="#d4d4d4"/><rect x="1812" y="152" width="4" height="2" fill="#6a9955"/><rect x="1817" y="152" width="11" height="2" fill="#6a9955"/><rect x="1829" y="152" width="4" height="2" fill="#6a9955"/><rect x="1834" y="152" width="2" height="2" fill="#6a9955"/><rect x="1837" y="152" width="3" height="2" fill="#6a9955"/><rect x="1841" y="152" width="4" height="2" fill="#6a9955"/><rect x="1785" y="154" width="3" height="2" fill="#569cd6"/><rect x="1789" y="154" width="8" height="2" fill="#dcdcaa"/><rect x="1797" y="154" width="1" height="2" fill="#d4d4d4"/><rect x="1798" y="154" width="3" height="2" fill="#569cd6"/><rect x="1802" y="154" width="1" height="2" fill="#9cdcfe"/><rect x="1803" y="154" width="1" height="2" fill="#d4d4d4"/><rect x="1805" y="154" width="3" height="2" fill="#569cd6"/><rect x="1809" y="154" width="1" height="2" fill="#9cdcfe"/><rect x="1810" y="154" width="1" height="2" fill="#d4d4d4"/><rect x="1811" y="154" width="1" height="2" fill="#d4d4d4"/><rect x="1812" y="154" width="6" height="2" fill="#6a9955"/><rect x="1819" y="154" width="11" height="2" fill="#6a9955"/><rect x="1831" y="154" width="4" height="2" fill="#6a9955"/><rect x="1836" y="154" width="2" height="2" fill="#6a9955"/><rect x="1839" y="154" width="3" height="2" fill="#6a9955"/><rect x="1843" y="154" width="4" height="2" fill="#6a9955"/><rect x="1785" y="156" width="3" height="2" fill="#569cd6"/><rect x="1789" y="156" width="7" height="2" fill="#dcdcaa"/><rect x="1796" y="156" width="1" height="2" fill="#d4d4d4"/><rect x="1797" y="156" width="3" height="2" fill="#569cd6"/><rect x="1801" y="156" width="1" height="2" fill="#9cdcfe"/><rect x="1802" y="156" width="1" height="2" fill="#d4d4d4"/><rect x="1804" y="156" width="3" height="2" fill="#569cd6"/><rect x="1808" y="156" width="1" height="2" fill="#9cdcfe"/><rect x="1809" y="156" width="1" height="2" fill="#d4d4d4"/><rect x="1810" y="156" width="1" height="2" fill="#d4d4d4"/><rect x="1812" y="156" width="5" height="2" fill="#6a9955"/><rect x="1818" y="156" width="11" height="2" fill="#6a9955"/><rect x="1830" y="156" width="4" height="2" fill="#6a9955"/><rect x="1835" y="156" width="2" height="2" fill="#6a9955"/><rect x="1838" y="156" width="3" height="2" fill="#6a9955"/><rect x="1842" y="156" width="4" height="2" fill="#6a9955"/><rect x="1785" y="158" width="3" height="2" fill="#569cd6"/><rect x="1789" y="158" width="8" height="2" fill="#dcdcaa"/><rect x="1797" y="158" width="1" height="2" fill="#d4d4d4"/><rect x="1798" y="158" width="3" height="2" fill="#569cd6"/><rect x="1802" y="158" width="1" height="2" fill="#9cdcfe"/><rect x="1803" y="158" width="1" height="2" fill="#d4d4d4"/><rect x="1805" y="158" width="3" height="2" fill="#569cd6"/><rect x="1809" y="158" width="1" height="2" fill="#9cdcfe"/><rect x="1810" y="158" width="1" height="2" fill="#d4d4d4"/><rect x="1811" y="158" width="1" height="2" fill="#d4d4d4"/><rect x="1812" y="158" width="6" height="2" fill="#6a9955"/><rect x="1819" y="158" width="11" height="2" fill="#6a9955"/><rect x="1831" y="158" width="4" height="2" fill="#6a9955"/><rect x="1836" y="158" width="2" height="2" fill="#6a9955"/><rect x="1839" y="158" width="3" height="2" fill="#6a9955"/><rect x="1843" y="158" width="4" height="2" fill="#6a9955"/><rect x="1785" y="160" width="3" height="2" fill="#569cd6"/><rect x="1789" y="160" width="7" height="2" fill="#dcdcaa"/><rect x="1796" y="160" width="1" height="2" fill="#d4d4d4"/><rect x="1797" y="160" width="3" height="2" fill="#569cd6"/><rect x="1801" y="160" width="1" height="2" fill="#9cdcfe"/><rect x="1802" y="160" width="1" height="2" fill="#d4d4d4"/><rect x="1804" y="160" width="3" height="2" fill="#569cd6"/><rect x="1808" y="160" width="1" height="2" fill="#9cdcfe"/><rect x="1809" y="160" width="1" height="2" fill="#d4d4d4"/><rect x="1810" y="160" width="1" height="2" fill="#d4d4d4"/><rect x="1812" y="160" width="5" height="2" fill="#6a9955"/><rect x="1818" y="160" width="11" height="2" fill="#6a9955"/><rect x="1830" y="160" width="4" height="2" fill="#6a9955"/><rect x="1835" y="160" width="2" height="2" fill="#6a9955"/><rect x="1838" y="160" width="3" height="2" fill="#6a9955"/><rect x="1842" y="160" width="4" height="2" fill="#6a9955"/><rect x="1785" y="162" width="3" height="2" fill="#569cd6"/><rect x="1789" y="162" width="8" height="2" fill="#dcdcaa"/><rect x="1797" y="162" width="1" height="2" fill="#d4d4d4"/><rect x="1798" y="162" width="3" height="2" fill="#569cd6"/><rect x="1802" y="162" width="1" height="2" fill="#9cdcfe"/><rect x="1803" y="162" width="1" height="2" fill="#d4d4d4"/><rect x="1805" y="162" width="3" height="2" fill="#569cd6"/><rect x="1809" y="162" width="1" height="2" fill="#9cdcfe"/><rect x="1810" y="162" width="1" height="2" fill="#d4d4d4"/><rect x="1811" y="162" width="1" height="2" fill="#d4d4d4"/><rect x="1812" y="162" width="6" height="2" fill="#6a9955"/><rect x="1819" y="162" width="11" height="2" fill="#6a9955"/><rect x="1831" y="162" width="4" height="2" fill="#6a9955"/><rect x="1836" y="162" width="2" height="2" fill="#6a9955"/><rect x="1839" y="162" width="3" height="2" fill="#6a9955"/><rect x="1843" y="162" width="4" height="2" fill="#6a9955"/><rect x="1785" y="164" width="3" height="2" fill="#569cd6"/><rect x="1789" y="164" width="7" height="2" fill="#dcdcaa"/><rect x="1796" y="164" width="1" height="2" fill="#d4d4d4"/><rect x="1797" y="164" width="3" height="2" fill="#569cd6"/><rect x="1801" y="164" width="1" height="2" fill="#9cdcfe"/><rect x="1802" y="164" width="1" height="2" fill="#d4d4d4"/><rect x="1804" y="164" width="3" height="2" fill="#569cd6"/><rect x="1808" y="164" width="1" height="2" fill="#9cdcfe"/><rect x="1809" y="164" width="1" height="2" fill="#d4d4d4"/><rect x="1810" y="164" width="1" height="2" fill="#d4d4d4"/><rect x="1812" y="164" width="5" height="2" fill="#6a9955"/><rect x="1818" y="164" width="11" height="2" fill="#6a9955"/><rect x="1830" y="164" width="4" height="2" fill="#6a9955"/><rect x="1835" y="164" width="2" height="2" fill="#6a9955"/><rect x="1838" y="164" width="3" height="2" fill="#6a9955"/><rect x="1842" y="164" width="4" height="2" fill="#6a9955"/><rect x="1785" y="166" width="3" height="2" fill="#569cd6"/><rect x="1789" y="166" width="8" height="2" fill="#dcdcaa"/><rect x="1797" y="166" width="1" height="2" fill="#d4d4d4"/><rect x="1798" y="166" width="3" height="2" fill="#569cd6"/><rect x="1802" y="166" width="1" height="2" fill="#9cdcfe"/><rect x="1803" y="166" width="1" height="2" fill="#d4d4d4"/><rect x="1805" y="166" width="3" height="2" fill="#569cd6"/><rect x="1809" y="166" width="1" height="2" fill="#9cdcfe"/><rect x="1810" y="166" width="1" height="2" fill="#d4d4d4"/><rect x="1811" y="166" width="1" height="2" fill="#d4d4d4"/><rect x="1812" y="166" width="6" height="2" fill="#6a9955"/><rect x="1819" y="166" width="11" height="2" fill="#6a9955"/><rect x="1831" y="166" width="4" height="2" fill="#6a9955"/><rect x="1836" y="166" width="2" height="2" fill="#6a9955"/><rect x="1839" y="166" width="3" height="2" fill="#6a9955"/><rect x="1843" y="166" width="4" height="2" fill="#6a9955"/><rect x="1785" y="168" width="3" height="2" fill="#569cd6"/><rect x="1789" y="168" width="7" height="2" fill="#dcdcaa"/><rect x="1796" y="168" width="1" height="2" fill="#d4d4d4"/><rect x="1797" y="168" width="3" height="2" fill="#569cd6"/><rect x="1801" y="168" width="1" height="2" fill="#9cdcfe"/><rect x="1802" y="168" width="1" height="2" fill="#d4d4d4"/><rect x="1804" y="168" width="3" height="2" fill="#569cd6"/><rect x="1808" y="168" width="1" height="2" fill="#9cdcfe"/><rect x="1809" y="168" width="1" height="2" fill="#d4d4d4"/><rect x="1810" y="168" width="1" height="2" fill="#d4d4d4"/><rect x="1812" y="168" width="5" height="2" fill="#6a9955"/><rect x="1818" y="168" width="11" height="2" fill="#6a9955"/><rect x="1830" y="168" width="4" height="2" fill="#6a9955"/><rect x="1835" y="168" width="2" height="2" fill="#6a9955"/><rect x="1838" y="168" width="3" height="2" fill="#6a9955"/><rect x="1842" y="168" width="4" height="2" fill="#6a9955"/><rect x="1785" y="170" width="3" height="2" fill="#569cd6"/><rect x="1789" y="170" width="7" height="2" fill="#dcdcaa"/><rect x="1796" y="170" width="1" height="2" fill="#d4d4d4"/><rect x="1797" y="170" width="3" height="2" fill="#569cd6"/><rect x="1801" y="170" width="1" height="2" fill="#9cdcfe"/><rect x="1802" y="170" width="1" height="2" fill="#d4d4d4"/><rect x="1804" y="170" width="3" height="2" fill="#569cd6"/><rect x="1808" y="170" width="1" height="2" fill="#9cdcfe"/><rect x="1809" y="170" width="1" height="2" fill="#d4d4d4"/><rect x="1810" y="170" width="1" height="2" fill="#d4d4d4"/><rect x="1812" y="170" width="5" height="2" fill="#6a9955"/><rect x="1818" y="170" width="11" height="2" fill="#6a9955"/><rect x="1830" y="170" width="4" height="2" fill="#6a9955"/><rect x="1835" y="170" width="2" height="2" fill="#6a9955"/><rect x="1838" y="170" width="3" height="2" fill="#6a9955"/><rect x="1842" y="170" width="4" height="2" fill="#6a9955"/><rect x="1785" y="172" width="3" height="2" fill="#569cd6"/><rect x="1789" y="172" width="9" height="2" fill="#dcdcaa"/><rect x="1798" y="172" width="1" height="2" fill="#d4d4d4"/><rect x="1799" y="172" width="3" height="2" fill="#569cd6"/><rect x="1803" y="172" width="1" height="2" fill="#9cdcfe"/><rect x="1804" y="172" width="1" height="2" fill="#d4d4d4"/><rect x="1806" y="172" width="3" height="2" fill="#569cd6"/><rect x="1810" y="172" width="1" height="2" fill="#9cdcfe"/><rect x="1811" y="172" width="1" height="2" fill="#d4d4d4"/><rect x="1812" y="172" width="1" height="2" fill="#d4d4d4"/><rect x="1813" y="172" width="7" height="2" fill="#6a9955"/><rect x="1821" y="172" width="11" height="2" fill="#6a9955"/><rect x="1833" y="172" width="4" height="2" fill="#6a9955"/><rect x="1838" y="172" width="2" height="2" fill="#6a9955"/><rect x="1841" y="172" width="3" height="2" fill="#6a9955"/><rect x="1845" y="172" width="4" height="2" fill="#6a9955"/><rect x="1785" y="176" width="3" height="2" fill="#569cd6"/><rect x="1789" y="176" width="4" height="2" fill="#dcdcaa"/><rect x="1793" y="176" width="1" height="2" fill="#d4d4d4"/><rect x="1794" y="176" width="4" height="2" fill="#569cd6"/><rect x="1798" y="176" width="1" height="2" fill="#d4d4d4"/><rect x="1799" y="176" width="1" height="2" fill="#d4d4d4"/><rect x="1789" y="178" width="3" height="2" fill="#569cd6"/><rect x="1793" y="178" width="6" height="2" fill="#9cdcfe"/><rect x="1800" y="178" width="1" height="2" fill="#d4d4d4"/><rect x="1802" y="178" width="1" height="2" fill="#b5cea8"/><rect x="1803" y="178" width="1" height="2" fill="#d4d4d4"/><rect x="1789" y="180" width="2" height="2" fill="#6a9955"/><rect x="1792" y="180" width="6" height="2" fill="#6a9955"/><rect x="1799" y="180" width="1" height="2" fill="#6a9955"/><rect x="1801" y="180" width="15" height="2" fill="#6a9955"/><rect x="1820" y="180" width="8" height="2" fill="#6a9955"/><rect x="1829" y="180" width="1" height="2" fill="#6a9955"/><rect x="1831" y="180" width="8" height="2" fill="#6a9955"/><rect x="1840" y="180" width="1" height="2" fill="#6a9955"/><rect x="1842" y="180" width="4" height="2" fill="#6a9955"/><rect x="1789" y="182" width="2" height="2" fill="#6a9955"/><rect x="1792" y="182" width="12" height="2" fill="#6a9955"/><rect x="1805" y="182" width="6" height="2" fill="#6a9955"/><rect x="1812" y="182" width="9" height="2" fill="#6a9955"/><rect x="1822" y="182" width="8" height="2" fill="#6a9955"/><rect x="1789" y="184" width="2" height="2" fill="#6a9955"/><rect x="1792" y="184" width="6" height="2" fill="#6a9955"/><rect x="1799" y="184" width="1" height="2" fill="#6a9955"/><rect x="1801" y="184" width="15" height="2" fill="#6a9955"/><rect x="1817" y="184" width="8" height="2" fill="#6a9955"/><rect x="1829" y="184" width="8" height="2" fill="#6a9955"/><rect x="1838" y="184" width="1" height="2" fill="#6a9955"/><rect x="1840" y="184" width="10" height="2" fill="#6a9955"/><rect x="1851" y="184" width="1" height="2" fill="#6a9955"/><rect x="1853" y="184" width="7" height="2" fill="#6a9955"/><rect x="1861" y="184" width="6" height="2" fill="#6a9955"/><rect x="1789" y="186" width="2" height="2" fill="#6a9955"/><rect x="1792" y="186" width="12" height="2" fill="#6a9955"/><rect x="1805" y="186" width="6" height="2" fill="#6a9955"/><rect x="1812" y="186" width="9" height="2" fill="#6a9955"/><rect x="1822" y="186" width="8" height="2" fill="#6a9955"/><rect x="1789" y="188" width="2" height="2" fill="#6a9955"/><rect x="1792" y="188" width="6" height="2" fill="#6a9955"/><rect x="1799" y="188" width="1" height="2" fill="#6a9955"/><rect x="1801" y="188" width="15" height="2" fill="#6a9955"/><rect x="1817" y="188" width="8" height="2" fill="#6a9955"/><rect x="1829" y="188" width="8" height="2" fill="#6a9955"/><rect x="1838" y="188" width="1" height="2" fill="#6a9955"/><rect x="1840" y="188" width="6" height="2" fill="#6a9955"/><rect x="1847" y="188" width="1" height="2" fill="#6a9955"/><rect x="1849" y="188" width="7" height="2" fill="#6a9955"/><rect x="1857" y="188" width="6" height="2" fill="#6a9955"/><rect x="1789" y="190" width="2" height="2" fill="#6a9955"/><rect x="1792" y="190" width="12" height="2" fill="#6a9955"/><rect x="1805" y="190" width="6" height="2" fill="#6a9955"/><rect x="1812" y="190" width="9" height="2" fill="#6a9955"/><rect x="1822" y="190" width="8" height="2" fill="#6a9955"/><rect x="1789" y="192" width="2" height="2" fill="#6a9955"/><rect x="1792" y="192" width="6" height="2" fill="#6a9955"/><rect x="1799" y="192" width="1" height="2" fill="#6a9955"/><rect x="1801" y="192" width="15" height="2" fill="#6a9955"/><rect x="1820" y="192" width="8" height="2" fill="#6a9955"/><rect x="1829" y="192" width="1" height="2" fill="#6a9955"/><rect x="1831" y="192" width="8" height="2" fill="#6a9955"/><rect x="1840" y="192" width="1" height="2" fill="#6a9955"/><rect x="1842" y="192" width="4" height="2" fill="#6a9955"/><rect x="1789" y="194" width="2" height="2" fill="#6a9955"/><rect x="1792" y="194" width="12" height="2" fill="#6a9955"/><rect x="1805" y="194" width="6" height="2" fill="#6a9955"/><rect x="1812" y="194" width="9" height="2" fill="#6a9955"/><rect x="1822" y="194" width="8" height="2" fill="#6a9955"/><rect x="1789" y="198" width="2" height="2" fill="#6a9955"/><rect x="1792" y="198" width="6" height="2" fill="#6a9955"/><rect x="1799" y="198" width="1" height="2" fill="#6a9955"/><rect x="1801" y="198" width="16" height="2" fill="#6a9955"/><rect x="1821" y="198" width="8" height="2" fill="#6a9955"/><rect x="1830" y="198" width="1" height="2" fill="#6a9955"/><rect x="1832" y="198" width="10" height="2" fill="#6a9955"/><rect x="1843" y="198" width="1" height="2" fill="#6a9955"/><rect x="1845" y="198" width="4" height="2" fill="#6a9955"/><rect x="1789" y="200" width="2" height="2" fill="#6a9955"/><rect x="1792" y="200" width="12" height="2" fill="#6a9955"/><rect x="1805" y="200" width="6" height="2" fill="#6a9955"/><rect x="1812" y="200" width="9" height="2" fill="#6a9955"/><rect x="1822" y="200" width="8" height="2" fill="#6a9955"/><rect x="1789" y="202" width="2" height="2" fill="#6a9955"/><rect x="1792" y="202" width="6" height="2" fill="#6a9955"/><rect x="1799" y="202" width="1" height="2" fill="#6a9955"/><rect x="1801" y="202" width="15" height="2" fill="#6a9955"/><rect x="1817" y="202" width="8" height="2" fill="#6a9955"/><rect x="1829" y="202" width="8" height="2" fill="#6a9955"/><rect x="1838" y="202" width="1" height="2" fill="#6a9955"/><rect x="1840" y="202" width="6" height="2" fill="#6a9955"/><rect x="1847" y="202" width="1" height="2" fill="#6a9955"/><rect x="1849" y="202" width="7" height="2" fill="#6a9955"/><rect x="1857" y="202" width="6" height="2" fill="#6a9955"/><rect x="1789" y="204" width="2" height="2" fill="#6a9955"/><rect x="1792" y="204" width="12" height="2" fill="#6a9955"/><rect x="1805" y="204" width="6" height="2" fill="#6a9955"/><rect x="1812" y="204" width="9" height="2" fill="#6a9955"/><rect x="1822" y="204" width="8" height="2" fill="#6a9955"/><rect x="1789" y="206" width="2" height="2" fill="#6a9955"/><rect x="1792" y="206" width="6" height="2" fill="#6a9955"/><rect x="1799" y="206" width="1" height="2" fill="#6a9955"/><rect x="1801" y="206" width="16" height="2" fill="#6a9955"/><rect x="1818" y="206" width="8" height="2" fill="#6a9955"/><rect x="1830" y="206" width="8" height="2" fill="#6a9955"/><rect x="1839" y="206" width="1" height="2" fill="#6a9955"/><rect x="1841" y="206" width="8" height="2" fill="#6a9955"/><rect x="1850" y="206" width="1" height="2" fill="#6a9955"/><rect x="1852" y="206" width="7" height="2" fill="#6a9955"/><rect x="1860" y="206" width="6" height="2" fill="#6a9955"/><rect x="1789" y="208" width="2" height="2" fill="#6a9955"/><rect x="1792" y="208" width="12" height="2" fill="#6a9955"/><rect x="1805" y="208" width="6" height="2" fill="#6a9955"/><rect x="1812" y="208" width="9" height="2" fill="#6a9955"/><rect x="1822" y="208" width="8" height="2" fill="#6a9955"/><rect x="1789" y="210" width="2" height="2" fill="#6a9955"/><rect x="1792" y="210" width="6" height="2" fill="#6a9955"/><rect x="1799" y="210" width="1" height="2" fill="#6a9955"/><rect x="1801" y="210" width="15" height="2" fill="#6a9955"/><rect x="1820" y="210" width="8" height="2" fill="#6a9955"/><rect x="1829" y="210" width="1" height="2" fill="#6a9955"/><rect x="1831" y="210" width="10" height="2" fill="#6a9955"/><rect x="1842" y="210" width="1" height="2" fill="#6a9955"/><rect x="1844" y="210" width="4" height="2" fill="#6a9955"/><rect x="1789" y="212" width="2" height="2" fill="#6a9955"/><rect x="1792" y="212" width="12" height="2" fill="#6a9955"/><rect x="1805" y="212" width="6" height="2" fill="#6a9955"/><rect x="1812" y="212" width="9" height="2" fill="#6a9955"/><rect x="1822" y="212" width="8" height="2" fill="#6a9955"/><rect x="1789" y="216" width="2" height="2" fill="#6a9955"/><rect x="1792" y="216" width="6" height="2" fill="#6a9955"/><rect x="1799" y="216" width="1" height="2" fill="#6a9955"/><rect x="1801" y="216" width="15" height="2" fill="#6a9955"/><rect x="1817" y="216" width="8" height="2" fill="#6a9955"/><rect x="1829" y="216" width="8" height="2" fill="#6a9955"/><rect x="1838" y="216" width="1" height="2" fill="#6a9955"/><rect x="1840" y="216" width="6" height="2" fill="#6a9955"/><rect x="1847" y="216" width="1" height="2" fill="#6a9955"/><rect x="1849" y="216" width="7" height="2" fill="#6a9955"/><rect x="1857" y="216" width="6" height="2" fill="#6a9955"/><rect x="1789" y="218" width="2" height="2" fill="#6a9955"/><rect x="1792" y="218" width="12" height="2" fill="#6a9955"/><rect x="1805" y="218" width="6" height="2" fill="#6a9955"/><rect x="1812" y="218" width="9" height="2" fill="#6a9955"/><rect x="1822" y="218" width="8" height="2" fill="#6a9955"/><rect x="1789" y="220" width="2" height="2" fill="#6a9955"/><rect x="1792" y="220" width="6" height="2" fill="#6a9955"/><rect x="1799" y="220" width="1" height="2" fill="#6a9955"/><rect x="1801" y="220" width="14" height="2" fill="#6a9955"/><rect x="1819" y="220" width="8" height="2" fill="#6a9955"/><rect x="1828" y="220" width="1" height="2" fill="#6a9955"/><rect x="1830" y="220" width="8" height="2" fill="#6a9955"/><rect x="1839" y="220" width="1" height="2" fill="#6a9955"/><rect x="1841" y="220" width="4" height="2" fill="#6a9955"/><rect x="1789" y="222" width="2" height="2" fill="#6a9955"/><rect x="1792" y="222" width="12" height="2" fill="#6a9955"/><rect x="1805" y="222" width="6" height="2" fill="#6a9955"/><rect x="1812" y="222" width="9" height="2" fill="#6a9955"/><rect x="1822" y="222" width="8" height="2" fill="#6a9955"/><rect x="1789" y="224" width="2" height="2" fill="#6a9955"/><rect x="1792" y="224" width="6" height="2" fill="#6a9955"/><rect x="1799" y="224" width="1" height="2" fill="#6a9955"/><rect x="1801" y="224" width="17" height="2" fill="#6a9955"/><rect x="1822" y="224" width="8" height="2" fill="#6a9955"/><rect x="1831" y="224" width="1" height="2" fill="#6a9955"/><rect x="1833" y="224" width="10" height="2" fill="#6a9955"/><rect x="1844" y="224" width="1" height="2" fill="#6a9955"/><rect x="1846" y="224" width="7" height="2" fill="#6a9955"/><rect x="1789" y="226" width="2" height="2" fill="#6a9955"/><rect x="1792" y="226" width="12" height="2" fill="#6a9955"/><rect x="1805" y="226" width="6" height="2" fill="#6a9955"/><rect x="1812" y="226" width="9" height="2" fill="#6a9955"/><rect x="1822" y="226" width="8" height="2" fill="#6a9955"/><rect x="1789" y="228" width="2" height="2" fill="#6a9955"/><rect x="1792" y="228" width="6" height="2" fill="#6a9955"/><rect x="1799" y="228" width="1" height="2" fill="#6a9955"/><rect x="1801" y="228" width="15" height="2" fill="#6a9955"/><rect x="1820" y="228" width="8" height="2" fill="#6a9955"/><rect x="1829" y="228" width="1" height="2" fill="#6a9955"/><rect x="1831" y="228" width="6" height="2" fill="#6a9955"/><rect x="1838" y="228" width="1" height="2" fill="#6a9955"/><rect x="1840" y="228" width="3" height="2" fill="#6a9955"/><rect x="1789" y="230" width="2" height="2" fill="#6a9955"/><rect x="1792" y="230" width="12" height="2" fill="#6a9955"/><rect x="1805" y="230" width="6" height="2" fill="#6a9955"/><rect x="1812" y="230" width="9" height="2" fill="#6a9955"/><rect x="1822" y="230" width="8" height="2" fill="#6a9955"/><rect x="1789" y="234" width="2" height="2" fill="#6a9955"/><rect x="1792" y="234" width="6" height="2" fill="#6a9955"/><rect x="1799" y="234" width="1" height="2" fill="#6a9955"/><rect x="1801" y="234" width="15" height="2" fill="#6a9955"/><rect x="1820" y="234" width="8" height="2" fill="#6a9955"/><rect x="1829" y="234" width="1" height="2" fill="#6a9955"/><rect x="1831" y="234" width="8" height="2" fill="#6a9955"/><rect x="1840" y="234" width="1" height="2" fill="#6a9955"/><rect x="1842" y="234" width="4" height="2" fill="#6a9955"/><rect x="1789" y="236" width="2" height="2" fill="#6a9955"/><rect x="1792" y="236" width="6" height="2" fill="#6a9955"/><rect x="1799" y="236" width="1" height="2" fill="#6a9955"/><rect x="1801" y="236" width="14" height="2" fill="#6a9955"/><rect x="1816" y="236" width="8" height="2" fill="#6a9955"/><rect x="1828" y="236" width="8" height="2" fill="#6a9955"/><rect x="1837" y="236" width="1" height="2" fill="#6a9955"/><rect x="1839" y="236" width="6" height="2" fill="#6a9955"/><rect x="1846" y="236" width="1" height="2" fill="#6a9955"/><rect x="1848" y="236" width="6" height="2" fill="#6a9955"/><rect x="1855" y="236" width="1" height="2" fill="#6a9955"/><rect x="1857" y="236" width="6" height="2" fill="#6a9955"/><rect x="1789" y="238" width="2" height="2" fill="#6a9955"/><rect x="1792" y="238" width="12" height="2" fill="#6a9955"/><rect x="1805" y="238" width="6" height="2" fill="#6a9955"/><rect x="1812" y="238" width="9" height="2" fill="#6a9955"/><rect x="1822" y="238" width="8" height="2" fill="#6a9955"/><rect x="1789" y="242" width="2" height="2" fill="#6a9955"/><rect x="1792" y="242" width="6" height="2" fill="#6a9955"/><rect x="1799" y="242" width="1" height="2" fill="#6a9955"/><rect x="1801" y="242" width="15" height="2" fill="#6a9955"/><rect x="1820" y="242" width="8" height="2" fill="#6a9955"/><rect x="1829" y="242" width="1" height="2" fill="#6a9955"/><rect x="1831" y="242" width="4" height="2" fill="#6a9955"/><rect x="1836" y="242" width="1" height="2" fill="#6a9955"/><rect x="1838" y="242" width="4" height="2" fill="#6a9955"/><rect x="1843" y="242" width="1" height="2" fill="#6a9955"/><rect x="1845" y="242" width="1" height="2" fill="#6a9955"/><rect x="1789" y="244" width="2" height="2" fill="#6a9955"/><rect x="1792" y="244" width="12" height="2" fill="#6a9955"/><rect x="1805" y="244" width="6" height="2" fill="#6a9955"/><rect x="1812" y="244" width="9" height="2" fill="#6a9955"/><rect x="1822" y="244" width="8" height="2" fill="#6a9955"/><rect x="1789" y="246" width="2" height="2" fill="#6a9955"/><rect x="1792" y="246" width="6" height="2" fill="#6a9955"/><rect x="1799" y="246" width="1" height="2" fill="#6a9955"/><rect x="1801" y="246" width="15" height="2" fill="#6a9955"/><rect x="1817" y="246" width="8" height="2" fill="#6a9955"/><rect x="1829" y="246" width="8" height="2" fill="#6a9955"/><rect x="1838" y="246" width="1" height="2" fill="#6a9955"/><rect x="1840" y="246" width="1" height="2" fill="#6a9955"/><rect x="1842" y="246" width="1" height="2" fill="#6a9955"/><rect x="1844" y="246" width="6" height="2" fill="#6a9955"/><rect x="1851" y="246" width="1" height="2" fill="#6a9955"/><rect x="1853" y="246" width="6" height="2" fill="#6a9955"/><rect x="1789" y="248" width="2" height="2" fill="#6a9955"/><rect x="1792" y="248" width="12" height="2" fill="#6a9955"/><rect x="1805" y="248" width="6" height="2" fill="#6a9955"/><rect x="1812" y="248" width="9" height="2" fill="#6a9955"/><rect x="1822" y="248" width="8" height="2" fill="#6a9955"/><rect x="1789" y="252" width="2" height="2" fill="#6a9955"/><rect x="1792" y="252" width="6" height="2" fill="#6a9955"/><rect x="1799" y="252" width="1" height="2" fill="#6a9955"/><rect x="1801" y="252" width="17" height="2" fill="#6a9955"/><rect x="1822" y="252" width="8" height="2" fill="#6a9955"/><rect x="1831" y="252" width="1" height="2" fill="#6a9955"/><rect x="1833" y="252" width="7" height="2" fill="#6a9955"/><rect x="1841" y="252" width="1" height="2" fill="#6a9955"/><rect x="1843" y="252" width="6" height="2" fill="#6a9955"/><rect x="1850" y="252" width="2" height="2" fill="#6a9955"/><rect x="1853" y="252" width="1" height="2" fill="#6a9955"/><rect x="1789" y="254" width="2" height="2" fill="#6a9955"/><rect x="1792" y="254" width="12" height="2" fill="#6a9955"/><rect x="1805" y="254" width="6" height="2" fill="#6a9955"/><rect x="1812" y="254" width="9" height="2" fill="#6a9955"/><rect x="1822" y="254" width="8" height="2" fill="#6a9955"/><rect x="1789" y="256" width="2" height="2" fill="#6a9955"/><rect x="1792" y="256" width="6" height="2" fill="#6a9955"/><rect x="1799" y="256" width="1" height="2" fill="#6a9955"/><rect x="1801" y="256" width="19" height="2" fill="#6a9955"/><rect x="1821" y="256" width="4" height="2" fill="#6a9955"/><rect x="1829" y="256" width="8" height="2" fill="#6a9955"/><rect x="1838" y="256" width="1" height="2" fill="#6a9955"/><rect x="1840" y="256" width="1" height="2" fill="#6a9955"/><rect x="1842" y="256" width="1" height="2" fill="#6a9955"/><rect x="1844" y="256" width="10" height="2" fill="#6a9955"/><rect x="1855" y="256" width="2" height="2" fill="#6a9955"/><rect x="1858" y="256" width="2" height="2" fill="#6a9955"/><rect x="1789" y="258" width="2" height="2" fill="#6a9955"/><rect x="1792" y="258" width="12" height="2" fill="#6a9955"/><rect x="1805" y="258" width="6" height="2" fill="#6a9955"/><rect x="1812" y="258" width="9" height="2" fill="#6a9955"/><rect x="1822" y="258" width="8" height="2" fill="#6a9955"/><rect x="1789" y="262" width="2" height="2" fill="#6a9955"/><rect x="1792" y="262" width="6" height="2" fill="#6a9955"/><rect x="1799" y="262" width="1" height="2" fill="#6a9955"/><rect x="1801" y="262" width="17" height="2" fill="#6a9955"/><rect x="1822" y="262" width="8" height="2" fill="#6a9955"/><rect x="1831" y="262" width="1" height="2" fill="#6a9955"/><rect x="1833" y="262" width="4" height="2" fill="#6a9955"/><rect x="1838" y="262" width="1" height="2" fill="#6a9955"/><rect x="1840" y="262" width="6" height="2" fill="#6a9955"/><rect x="1847" y="262" width="2" height="2" fill="#6a9955"/><rect x="1850" y="262" width="1" height="2" fill="#6a9955"/><rect x="1789" y="264" width="2" height="2" fill="#6a9955"/><rect x="1792" y="264" width="12" height="2" fill="#6a9955"/><rect x="1805" y="264" width="6" height="2" fill="#6a9955"/><rect x="1812" y="264" width="9" height="2" fill="#6a9955"/><rect x="1822" y="264" width="8" height="2" fill="#6a9955"/><rect x="1789" y="266" width="2" height="2" fill="#6a9955"/><rect x="1792" y="266" width="6" height="2" fill="#6a9955"/><rect x="1799" y="266" width="1" height="2" fill="#6a9955"/><rect x="1801" y="266" width="19" height="2" fill="#6a9955"/><rect x="1821" y="266" width="4" height="2" fill="#6a9955"/><rect x="1829" y="266" width="8" height="2" fill="#6a9955"/><rect x="1838" y="266" width="1" height="2" fill="#6a9955"/><rect x="1840" y="266" width="6" height="2" fill="#6a9955"/><rect x="1847" y="266" width="1" height="2" fill="#6a9955"/><rect x="1849" y="266" width="10" height="2" fill="#6a9955"/><rect x="1860" y="266" width="2" height="2" fill="#6a9955"/><rect x="1863" y="266" width="2" height="2" fill="#6a9955"/><rect x="1789" y="268" width="2" height="2" fill="#6a9955"/><rect x="1792" y="268" width="12" height="2" fill="#6a9955"/><rect x="1805" y="268" width="6" height="2" fill="#6a9955"/><rect x="1812" y="268" width="9" height="2" fill="#6a9955"/><rect x="1822" y="268" width="8" height="2" fill="#6a9955"/><rect x="1789" y="272" width="6" height="2" fill="#9cdcfe"/><rect x="1796" y="272" width="1" height="2" fill="#d4d4d4"/><rect x="1798" y="272" width="8" height="2" fill="#dcdcaa"/><rect x="1806" y="272" width="1" height="2" fill="#d4d4d4"/><rect x="1807" y="272" width="6" height="2" fill="#b5cea8"/><rect x="1813" y="272" width="1" height="2" fill="#d4d4d4"/><rect x="1814" y="272" width="1" height="2" fill="#d4d4d4"/><rect x="1819" y="272" width="8" height="2" fill="#6a9955"/><rect x="1828" y="272" width="1" height="2" fill="#6a9955"/><rect x="1830" y="272" width="4" height="2" fill="#6a9955"/><rect x="1835" y="272" width="1" height="2" fill="#6a9955"/><rect x="1837" y="272" width="6" height="2" fill="#6a9955"/><rect x="1844" y="272" width="2" height="2" fill="#6a9955"/><rect x="1847" y="272" width="1" height="2" fill="#6a9955"/><rect x="1789" y="274" width="6" height="2" fill="#dcdcaa"/><rect x="1795" y="274" width="1" height="2" fill="#d4d4d4"/><rect x="1796" y="274" width="5" height="2" fill="#ce9178"/><rect x="1802" y="274" width="6" height="2" fill="#ce9178"/><rect x="1809" y="274" width="8" height="2" fill="#ce9178"/><rect x="1817" y="274" width="1" height="2" fill="#d4d4d4"/><rect x="1819" y="274" width="6" height="2" fill="#9cdcfe"/><rect x="1825" y="274" width="1" height="2" fill="#d4d4d4"/><rect x="1826" y="274" width="1" height="2" fill="#d4d4d4"/><rect x="1789" y="276" width="6" height="2" fill="#9cdcfe"/><rect x="1796" y="276" width="1" height="2" fill="#d4d4d4"/><rect x="1798" y="276" width="7" height="2" fill="#dcdcaa"/><rect x="1805" y="276" width="1" height="2" fill="#d4d4d4"/><rect x="1806" y="276" width="10" height="2" fill="#b5cea8"/><rect x="1816" y="276" width="1" height="2" fill="#d4d4d4"/><rect x="1818" y="276" width="2" height="2" fill="#b5cea8"/><rect x="1820" y="276" width="1" height="2" fill="#d4d4d4"/><rect x="1821" y="276" width="1" height="2" fill="#d4d4d4"/><rect x="1826" y="276" width="8" height="2" fill="#6a9955"/><rect x="1835" y="276" width="1" height="2" fill="#6a9955"/><rect x="1837" y="276" width="10" height="2" fill="#6a9955"/><rect x="1848" y="276" width="1" height="2" fill="#6a9955"/><rect x="1850" y="276" width="10" height="2" fill="#6a9955"/><rect x="1861" y="276" width="2" height="2" fill="#6a9955"/><rect x="1864" y="276" width="2" height="2" fill="#6a9955"/><rect x="1789" y="278" width="6" height="2" fill="#dcdcaa"/><rect x="1795" y="278" width="1" height="2" fill="#d4d4d4"/><rect x="1796" y="278" width="5" height="2" fill="#ce9178"/><rect x="1802" y="278" width="6" height="2" fill="#ce9178"/><rect x="1809" y="278" width="8" height="2" fill="#ce9178"/><rect x="1817" y="278" width="1" height="2" fill="#d4d4d4"/><rect x="1819" y="278" width="6" height="2" fill="#9cdcfe"/><rect x="1825" y="278" width="1" height="2" fill="#d4d4d4"/><rect x="1826" y="278" width="1" height="2" fill="#d4d4d4"/><rect x="1789" y="280" width="6" height="2" fill="#c586c0"/><rect x="1796" y="280" width="1" height="2" fill="#b5cea8"/><rect x="1797" y="280" width="1" height="2" fill="#d4d4d4"/><rect x="1785" y="282" width="1" height="2" fill="#d4d4d4"/><rect x="1784" y="276" width="112" height="2" fill="#264f78"/></svg>
<div style="left:536px;top:704px;width:1374px;height:282px;background:#1e1e1e;"></div>
<div style="left:536px;top:704px;width:1374px;height:1px;background:#454545;"></div>
<div style="left:555.5px;top:716.00px;line-height:15px;font-size:11px;color:#9d9d9d;font-family:'Liberation Sans',sans-serif;white-space:pre;transform:scaleX(0.9545);transform-origin:0 50%;">问题</div>
<div style="left:600.5px;top:716.00px;line-height:15px;font-size:11px;color:#9d9d9d;font-family:'Liberation Sans',sans-serif;white-space:pre;transform:scaleX(0.9773);transform-origin:0 50%;">输出</div>
<div style="left:647px;top:716.00px;line-height:15px;font-size:11px;color:#9d9d9d;font-family:'Liberation Sans',sans-serif;white-space:pre;transform:scaleX(0.9636);transform-origin:0 50%;">调试控制台</div>
<div style="left:724px;top:716.00px;line-height:15px;font-size:11px;color:#e7e7e7;font-family:'Liberation Sans',sans-serif;white-space:pre;transform:scaleX(1.0455);transform-origin:0 50%;">终端</div>
<div style="left:722px;top:732.5px;width:26px;height:1px;background:#e7e7e7;"></div>
<svg style="left:1822px;top:714px;" width="16" height="16" viewBox="0 0 16 16" fill="none"><path d="M8 1.5v13M1.5 8h13" stroke="#c5c5c5" stroke-width="1.2"/></svg>
<svg style="left:1842px;top:718px;" width="10" height="10" viewBox="0 0 10 10" fill="none"><path d="M1.5 3l3.5 3.5L8.5 3" stroke="#c5c5c5" stroke-width="1.1"/></svg>
<svg style="left:1862px;top:715px;" width="14" height="14" viewBox="0 0 14 14" fill="none"><path d="M2 9l5-5 5 5" stroke="#c5c5c5" stroke-width="1.2"/></svg>
<svg style="left:1884px;top:715px;" width="14" height="14" viewBox="0 0 14 14" fill="none"><path d="M2.5 2.5l9 9M11.5 2.5l-9 9" stroke="#c5c5c5" stroke-width="1.2"/></svg>
<div style="left:555.50px;top:747.50px;line-height:18px;font-size:13.17px;font-family:'Liberation Mono',monospace;color:#cccccc;white-space:pre;">CC -[M] </div>
<div style="left:618.70px;top:747.50px;width:15.8px;text-align:center;line-height:18px;font-size:13.5px;color:#cccccc;white-space:pre;">正</div>
<div style="left:634.50px;top:747.50px;width:15.8px;text-align:center;line-height:18px;font-size:13.5px;color:#cccccc;white-space:pre;">在</div>
<div style="left:650.30px;top:747.50px;width:15.8px;text-align:center;line-height:18px;font-size:13.5px;color:#cccccc;white-space:pre;">构</div>
<div style="left:666.10px;top:747.50px;width:15.8px;text-align:center;line-height:18px;font-size:13.5px;color:#cccccc;white-space:pre;">建</div>
<div style="left:681.90px;top:747.50px;line-height:18px;font-size:13.17px;font-family:'Liberation Mono',monospace;color:#cccccc;white-space:pre;">... main.elf</div>
<div style="left:555.50px;top:763.30px;line-height:18px;font-size:13.17px;font-family:'Liberation Mono',monospace;color:#cccccc;white-space:pre;">CC -[M] </div>
<div style="left:618.70px;top:763.30px;width:15.8px;text-align:center;line-height:18px;font-size:13.5px;color:#cccccc;white-space:pre;">正</div>
<div style="left:634.50px;top:763.30px;width:15.8px;text-align:center;line-height:18px;font-size:13.5px;color:#cccccc;white-space:pre;">在</div>
<div style="left:650.30px;top:763.30px;width:15.8px;text-align:center;line-height:18px;font-size:13.5px;color:#cccccc;white-space:pre;">构</div>
<div style="left:666.10px;top:763.30px;width:15.8px;text-align:center;line-height:18px;font-size:13.5px;color:#cccccc;white-space:pre;">建</div>
<div style="left:681.90px;top:763.30px;line-height:18px;font-size:13.17px;font-family:'Liberation Mono',monospace;color:#cccccc;white-space:pre;">... addsub.o</div>
<div style="left:555.50px;top:779.10px;line-height:18px;font-size:13.17px;font-family:'Liberation Mono',monospace;color:#cccccc;white-space:pre;">CC -[M] </div>
<div style="left:618.70px;top:779.10px;width:15.8px;text-align:center;line-height:18px;font-size:13.5px;color:#cccccc;white-space:pre;">正</div>
<div style="left:634.50px;top:779.10px;width:15.8px;text-align:center;line-height:18px;font-size:13.5px;color:#cccccc;white-space:pre;">在</div>
<div style="left:650.30px;top:779.10px;width:15.8px;text-align:center;line-height:18px;font-size:13.5px;color:#cccccc;white-space:pre;">构</div>
<div style="left:666.10px;top:779.10px;width:15.8px;text-align:center;line-height:18px;font-size:13.5px;color:#cccccc;white-space:pre;">建</div>
<div style="left:681.90px;top:779.10px;line-height:18px;font-size:13.17px;font-family:'Liberation Mono',monospace;color:#cccccc;white-space:pre;">... sll.o</div>
<div style="left:555.50px;top:794.90px;line-height:18px;font-size:13.17px;font-family:'Liberation Mono',monospace;color:#cccccc;white-space:pre;">CC -[M] </div>
<div style="left:618.70px;top:794.90px;width:15.8px;text-align:center;line-height:18px;font-size:13.5px;color:#cccccc;white-space:pre;">正</div>
<div style="left:634.50px;top:794.90px;width:15.8px;text-align:center;line-height:18px;font-size:13.5px;color:#cccccc;white-space:pre;">在</div>
<div style="left:650.30px;top:794.90px;width:15.8px;text-align:center;line-height:18px;font-size:13.5px;color:#cccccc;white-space:pre;">构</div>
<div style="left:666.10px;top:794.90px;width:15.8px;text-align:center;line-height:18px;font-size:13.5px;color:#cccccc;white-space:pre;">建</div>
<div style="left:681.90px;top:794.90px;line-height:18px;font-size:13.17px;font-family:'Liberation Mono',monospace;color:#cccccc;white-space:pre;">... and.o</div>
<div style="left:555.50px;top:810.70px;line-height:18px;font-size:13.17px;font-family:'Liberation Mono',monospace;color:#cccccc;white-space:pre;">CC -[M] </div>
<div style="left:618.70px;top:810.70px;width:15.8px;text-align:center;line-height:18px;font-size:13.5px;color:#cccccc;white-space:pre;">正</div>
<div style="left:634.50px;top:810.70px;width:15.8px;text-align:center;line-height:18px;font-size:13.5px;color:#cccccc;white-space:pre;">在</div>
<div style="left:650.30px;top:810.70px;width:15.8px;text-align:center;line-height:18px;font-size:13.5px;color:#cccccc;white-space:pre;">构</div>
<div style="left:666.10px;top:810.70px;width:15.8px;text-align:center;line-height:18px;font-size:13.5px;color:#cccccc;white-space:pre;">建</div>
<div style="left:681.90px;top:810.70px;line-height:18px;font-size:13.17px;font-family:'Liberation Mono',monospace;color:#cccccc;white-space:pre;">... addi.o</div>
<div style="left:555.50px;top:826.50px;line-height:18px;font-size:13.17px;font-family:'Liberation Mono',monospace;color:#cccccc;white-space:pre;">CC -[M] </div>
<div style="left:618.70px;top:826.50px;width:15.8px;text-align:center;line-height:18px;font-size:13.5px;color:#cccccc;white-space:pre;">正</div>
<div style="left:634.50px;top:826.50px;width:15.8px;text-align:center;line-height:18px;font-size:13.5px;color:#cccccc;white-space:pre;">在</div>
<div style="left:650.30px;top:826.50px;width:15.8px;text-align:center;line-height:18px;font-size:13.5px;color:#cccccc;white-space:pre;">构</div>
<div style="left:666.10px;top:826.50px;width:15.8px;text-align:center;line-height:18px;font-size:13.5px;color:#cccccc;white-space:pre;">建</div>
<div style="left:681.90px;top:826.50px;line-height:18px;font-size:13.17px;font-family:'Liberation Mono',monospace;color:#cccccc;white-space:pre;">... slti.o</div>
<div style="left:555.50px;top:842.30px;line-height:18px;font-size:13.17px;font-family:'Liberation Mono',monospace;color:#cccccc;white-space:pre;">CC -[M] </div>
<div style="left:618.70px;top:842.30px;width:15.8px;text-align:center;line-height:18px;font-size:13.5px;color:#cccccc;white-space:pre;">正</div>
<div style="left:634.50px;top:842.30px;width:15.8px;text-align:center;line-height:18px;font-size:13.5px;color:#cccccc;white-space:pre;">在</div>
<div style="left:650.30px;top:842.30px;width:15.8px;text-align:center;line-height:18px;font-size:13.5px;color:#cccccc;white-space:pre;">构</div>
<div style="left:666.10px;top:842.30px;width:15.8px;text-align:center;line-height:18px;font-size:13.5px;color:#cccccc;white-space:pre;">建</div>
<div style="left:681.90px;top:842.30px;line-height:18px;font-size:13.17px;font-family:'Liberation Mono',monospace;color:#cccccc;white-space:pre;">... main.o</div>
<div style="left:555.50px;top:873.90px;width:15.8px;text-align:center;line-height:18px;font-size:13.5px;color:#cccccc;white-space:pre;font-weight:bold;">终</div>
<div style="left:571.30px;top:873.90px;width:15.8px;text-align:center;line-height:18px;font-size:13.5px;color:#cccccc;white-space:pre;font-weight:bold;">端</div>
<div style="left:587.10px;top:873.90px;width:15.8px;text-align:center;line-height:18px;font-size:13.5px;color:#cccccc;white-space:pre;font-weight:bold;">将</div>
<div style="left:602.90px;top:873.90px;width:15.8px;text-align:center;line-height:18px;font-size:13.5px;color:#cccccc;white-space:pre;font-weight:bold;">被</div>
<div style="left:618.70px;top:873.90px;width:15.8px;text-align:center;line-height:18px;font-size:13.5px;color:#cccccc;white-space:pre;font-weight:bold;">任</div>
<div style="left:634.50px;top:873.90px;width:15.8px;text-align:center;line-height:18px;font-size:13.5px;color:#cccccc;white-space:pre;font-weight:bold;">务</div>
<div style="left:650.30px;top:873.90px;width:15.8px;text-align:center;line-height:18px;font-size:13.5px;color:#cccccc;white-space:pre;font-weight:bold;">重</div>
<div style="left:666.10px;top:873.90px;width:15.8px;text-align:center;line-height:18px;font-size:13.5px;color:#cccccc;white-space:pre;font-weight:bold;">用</div>
<div style="left:681.90px;top:873.90px;width:15.8px;text-align:center;line-height:18px;font-size:13.5px;color:#cccccc;white-space:pre;font-weight:bold;">，</div>
<div style="left:697.70px;top:873.90px;width:15.8px;text-align:center;line-height:18px;font-size:13.5px;color:#cccccc;white-space:pre;font-weight:bold;">按</div>
<div style="left:713.50px;top:873.90px;width:15.8px;text-align:center;line-height:18px;font-size:13.5px;color:#cccccc;white-space:pre;font-weight:bold;">任</div>
<div style="left:729.30px;top:873.90px;width:15.8px;text-align:center;line-height:18px;font-size:13.5px;color:#cccccc;white-space:pre;font-weight:bold;">意</div>
<div style="left:745.10px;top:873.90px;width:15.8px;text-align:center;line-height:18px;font-size:13.5px;color:#cccccc;white-space:pre;font-weight:bold;">键</div>
<div style="left:760.90px;top:873.90px;width:15.8px;text-align:center;line-height:18px;font-size:13.5px;color:#cccccc;white-space:pre;font-weight:bold;">关</div>
<div style="left:776.70px;top:873.90px;width:15.8px;text-align:center;line-height:18px;font-size:13.5px;color:#cccccc;white-space:pre;font-weight:bold;">闭</div>
<div style="left:792.50px;top:873.90px;width:15.8px;text-align:center;line-height:18px;font-size:13.5px;color:#cccccc;white-space:pre;font-weight:bold;">。</div>
<div style="left:555.50px;top:905.50px;line-height:18px;font-size:13.17px;font-family:'Liberation Mono',monospace;color:#cccccc;white-space:pre;font-weight:bold;">&gt; Executing task: echo Starting RISCV-QEMU&amp;qemu-riscv32 -g 1234 ./*.elf &lt;</div>
<div style="left:555.50px;top:937.10px;line-height:18px;font-size:13.17px;font-family:'Liberation Mono',monospace;color:#cccccc;white-space:pre;">Starting RISCV-QEMU</div>
<div style="left:555.50px;top:952.90px;line-height:18px;font-size:13.17px;font-family:'Liberation Mono',monospace;color:#cccccc;white-space:pre;">This result is:11</div>
<div style="left:530.8px;top:936.8px;width:764.5px;height:37.5px;background:transparent;border:2.5px solid #e8204f;box-sizing:border-box;"></div>
<div style="left:1710.5px;top:737px;width:1px;height:249px;background:#3a3a3a;"></div>
<svg style="left:1721px;top:743px;" width="15" height="15" viewBox="0 0 15 15" fill="none"><path d="M1.5 1.5h12v12h-12z" stroke="#cccccc" stroke-width="1.1"/><path d="M5 4.5l3 3-3 3" stroke="#cccccc" stroke-width="1.1"/></svg>
<div style="left:1740.7px;top:741.40px;line-height:18px;font-size:13px;color:#cccccc;font-family:'Liberation Sans',sans-serif;white-space:pre;transform:scaleX(0.9751);transform-origin:0 50%;">bash</div>
<div style="left:1712px;top:761px;width:198px;height:21.5px;background:#37373d;"></div>
<svg style="left:1721px;top:764px;" width="16" height="16" viewBox="0 0 16 16" fill="none"><path d="M2.5 13.5l6-6M4 2.5a3 3 0 0 0 3.5 4l6 6.5-1.5 1.5-6.5-6a3 3 0 0 1-4-3.5l2 2 1.5-1.5z M9.5 6.5l3-3.5 1.5 1.5-3.5 3" stroke="#cccccc" stroke-width="1.1" stroke-linejoin="round"/></svg>
<div style="left:1740.7px;top:762.70px;line-height:18px;font-size:13px;color:#cccccc;font-family:'Liberation Sans',sans-serif;white-space:pre;transform:scaleX(0.9243);transform-origin:0 50%;">Run RISCV-QEMU</div>
<div style="left:1849px;top:763.50px;line-height:17px;font-size:12px;color:#a0a0a0;font-family:'Liberation Sans',sans-serif;white-space:pre;transform:scaleX(0.9316);transform-origin:0 50%;">Task</div>
<svg style="left:1885px;top:764px;" width="16" height="16" viewBox="0 0 16 16" fill="none"><path d="M2 8.5l3.5 3.5 8.5-9" stroke="#b0b0b0" stroke-width="1.2"/></svg>
<div style="left:10px;top:986px;width:1900px;height:22px;background:#cc6633;"></div>
<div style="left:10px;top:986px;width:33.5px;height:22px;background:#16825d;"></div>
<svg style="left:20px;top:989px;" width="14" height="16" viewBox="0 0 14 16" fill="none"><path d="M2 6l4.5 4L2 14M12 2L7.5 6.5 12 11" stroke="#fff" stroke-width="1.3"/></svg>
<svg style="left:50px;top:990px;" width="15" height="15" viewBox="0 0 15 15" fill="none"><circle cx="7.5" cy="7.5" r="6" stroke="#fff" stroke-width="1.1"/><path d="M5 5l5 5M10 5l-5 5" stroke="#fff" stroke-width="1.1"/></svg>
<div style="left:68px;top:989.20px;line-height:18px;font-size:12.5px;color:#ffffff;font-family:'Liberation Sans',sans-serif;white-space:pre;transform:scaleX(0.6472);transform-origin:0 50%;">0</div>
<svg style="left:77px;top:989px;" width="15" height="15" viewBox="0 0 15 15" fill="none"><path d="M7.5 2L13.5 13H1.5z" stroke="#fff" stroke-width="1.1" stroke-linejoin="round"/><path d="M7.5 6v3.5M7.5 10.8v1" stroke="#fff" stroke-width="1.1"/></svg>
<div style="left:94px;top:989.20px;line-height:18px;font-size:12.5px;color:#ffffff;font-family:'Liberation Sans',sans-serif;white-space:pre;transform:scaleX(0.7910);transform-origin:0 50%;">0</div>
<svg style="left:115px;top:990px;" width="15" height="15" viewBox="0 0 15 15" fill="none"><path d="M2.5 12.5l5-5M3.5 2.5a2.5 2.5 0 0 0 3 3.5l5.5 6-1.3 1.3-6-5.5a2.5 2.5 0 0 1-3.5-3l1.8 1.8 1.3-1.3z M8.5 6l3-3.3 1.3 1.3-3.3 3" stroke="#fff" stroke-width="1.1" stroke-linejoin="round"/></svg>
<div style="left:132.5px;top:989.20px;line-height:18px;font-size:12.5px;color:#ffffff;font-family:'Liberation Sans',sans-serif;white-space:pre;transform:scaleX(0.7910);transform-origin:0 50%;">1</div>
<svg style="left:153px;top:989px;" width="16" height="16" viewBox="0 0 16 16" fill="none"><path d="M7.5 2.5v5M7.5 2.5l7 5-4 0" stroke="#fff" stroke-width="1.1" stroke-linejoin="round"/><ellipse cx="5" cy="11" rx="2.2" ry="2.8" stroke="#fff" stroke-width="1.1"/></svg>
<div style="left:171.8px;top:989.20px;line-height:18px;font-size:12.5px;color:#ffffff;font-family:'Liberation Sans',sans-serif;white-space:pre;transform:scaleX(0.9305);transform-origin:0 50%;">(gdb) 启动 (16)</div>
<div style="left:1576px;top:989.20px;line-height:18px;font-size:12.5px;color:#ffffff;font-family:'Liberation Sans',sans-serif;white-space:pre;transform:scaleX(0.8980);transform-origin:0 50%;">行 74，列 1</div>
<div style="left:1652.8px;top:989.20px;line-height:18px;font-size:12.5px;color:#ffffff;font-family:'Liberation Sans',sans-serif;white-space:pre;transform:scaleX(0.9770);transform-origin:0 50%;">空格:4</div>
<div style="left:1704.4px;top:989.20px;line-height:18px;font-size:12.5px;color:#ffffff;font-family:'Liberation Sans',sans-serif;white-space:pre;transform:scaleX(0.9203);transform-origin:0 50%;">UTF-8</div>
<div style="left:1753px;top:989.20px;line-height:18px;font-size:12.5px;color:#ffffff;font-family:'Liberation Sans',sans-serif;white-space:pre;transform:scaleX(0.8908);transform-origin:0 50%;">LF</div>
<div style="left:1782px;top:989.20px;line-height:18px;font-size:12.5px;color:#ffffff;font-family:'Liberation Sans',sans-serif;white-space:pre;transform:scaleX(0.8858);transform-origin:0 50%;">C</div>
<div style="left:1805.6px;top:989.20px;line-height:18px;font-size:12.5px;color:#ffffff;font-family:'Liberation Sans',sans-serif;white-space:pre;transform:scaleX(1.0037);transform-origin:0 50%;">Linux</div>
<svg style="left:1851px;top:989px;" width="16" height="16" viewBox="0 0 16 16" fill="none"><path d="M2.5 13.5c1.5-3 3-4.5 5-5.5M4.5 6.5a3.5 3.5 0 1 0 4-4.5c2.5 0 4.5 1.5 4.5 4 0 2-1.5 3.5-3.5 3.5l3 5.5" stroke="#fff" stroke-width="1.1"/></svg>
<svg style="left:1881px;top:988px;" width="16" height="16" viewBox="0 0 16 16" fill="none"><path d="M4 12V7a4 4 0 0 1 8 0v5l1.5 1.5h-11z M6.5 14.5a1.5 1.5 0 0 0 3 0" stroke="#fff" stroke-width="1.1"/><circle cx="12" cy="4" r="2.6" fill="#fff"/></svg>
</body></html>
